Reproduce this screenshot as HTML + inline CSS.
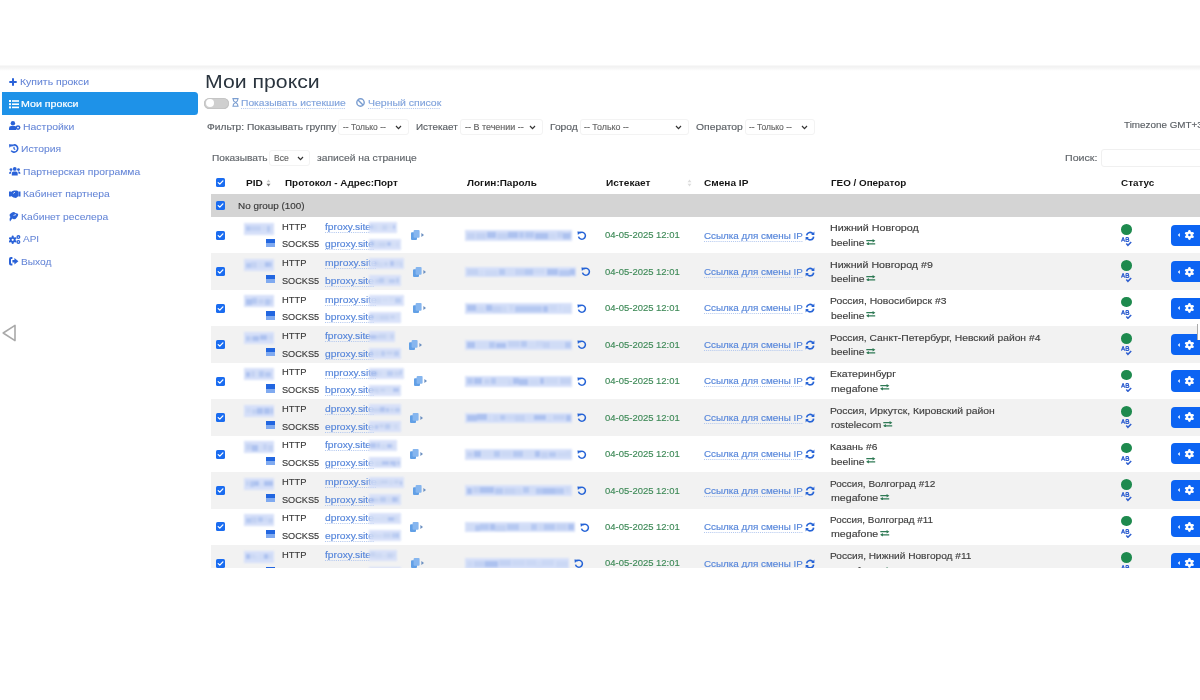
<!DOCTYPE html>
<html><head><meta charset="utf-8"><style>
html,body{margin:0;padding:0;background:#fff;width:1200px;height:700px;overflow:hidden;position:relative}
.t{position:absolute;font-family:"Liberation Sans",sans-serif;white-space:pre;line-height:1;transform-origin:0 0}
.dot{text-decoration:underline dotted #b3c8ef;text-decoration-thickness:1px;text-underline-offset:2.2px}
.blur{position:absolute;background:#d6e0f9;filter:blur(1px)}
.blur i{position:absolute}
.tb .blur{opacity:0.92}
#clip{position:absolute;left:0;top:0;width:1200px;height:568px;overflow:hidden}
</style></head><body>
<div id="clip">
<div style='position:absolute;left:0.00px;top:64.50px;width:1200.00px;height:6.50px;background:linear-gradient(#fbfbfb,#f2f2f2 25%,#f6f6f6 55%,#ffffff)'></div>
<div style='position:absolute;left:2.00px;top:92.30px;width:196.00px;height:22.70px;background:#1e92e8;border-radius:0 3.5px 3.5px 0'></div>
<div style='position:absolute;left:204.40px;top:97.80px;width:24.20px;height:11.10px;background:#cfcfcf;border-radius:6px;box-shadow:inset 0 0 0 0.8px #c2c2c2'></div>
<div style='position:absolute;left:206.20px;top:99.40px;width:8.20px;height:8.00px;background:#fff;border-radius:50%'></div>
<div style='position:absolute;left:338.00px;top:119.40px;width:71.00px;height:15.60px;border:1px solid #f3f3f3;border-radius:3px;box-sizing:border-box;background:#fff'></div>
<div style='position:absolute;left:460.00px;top:119.40px;width:83.00px;height:15.60px;border:1px solid #f3f3f3;border-radius:3px;box-sizing:border-box;background:#fff'></div>
<div style='position:absolute;left:580.00px;top:119.40px;width:109.00px;height:15.60px;border:1px solid #f3f3f3;border-radius:3px;box-sizing:border-box;background:#fff'></div>
<div style='position:absolute;left:745.00px;top:119.40px;width:70.00px;height:15.60px;border:1px solid #f3f3f3;border-radius:3px;box-sizing:border-box;background:#fff'></div>
<div style='position:absolute;left:269.00px;top:150.00px;width:41.00px;height:16.00px;border:1px solid #f3f3f3;border-radius:3px;box-sizing:border-box;background:#fff'></div>
<div style='position:absolute;left:1101.00px;top:149.00px;width:103.00px;height:17.50px;border:1px solid #f0f0f0;border-radius:3px;box-sizing:border-box'></div>
<div style='position:absolute;left:211.00px;top:194.00px;width:989.00px;height:23.00px;background:#d4d4d4'></div>
<div style='position:absolute;left:211.00px;top:253.45px;width:989.00px;height:36.45px;background:#f2f2f2'></div>
<div style='position:absolute;left:211.00px;top:326.35px;width:989.00px;height:36.45px;background:#f2f2f2'></div>
<div style='position:absolute;left:211.00px;top:399.25px;width:989.00px;height:36.45px;background:#f2f2f2'></div>
<div style='position:absolute;left:211.00px;top:472.15px;width:989.00px;height:36.45px;background:#f2f2f2'></div>
<div style='position:absolute;left:211.00px;top:545.05px;width:989.00px;height:36.45px;background:#f2f2f2'></div>
<svg style='position:absolute;left:9px;top:77.5px' width='8' height='8' viewBox='0 0 8 8'><path d='M4 0.3V7.7M0.3 4H7.7' stroke='#2a62d8' stroke-width='2'/></svg>
<svg style='position:absolute;left:8.7px;top:100px' width='10' height='8.5' viewBox='0 0 10 8.5'><g fill='#fff'><rect x='0' y='0' width='2' height='2'/><rect x='3' y='0.2' width='7' height='1.6'/><rect x='0' y='3.2' width='2' height='2'/><rect x='3' y='3.4' width='7' height='1.6'/><rect x='0' y='6.4' width='2' height='2'/><rect x='3' y='6.6' width='7' height='1.6'/></g></svg>
<svg style='position:absolute;left:9.2px;top:121.4px' width='11.5' height='9' viewBox='0 0 11.5 9'><g fill='#2a62d8'><circle cx='3.9' cy='2.2' r='2.2'/><path d='M0 9 V7.2 Q0 5 2.2 5 H5.6 Q7 5 7.2 6 V9Z'/><circle cx='9' cy='6.6' r='2.4'/></g><circle cx='9' cy='6.6' r='0.9' fill='#fff'/></svg>
<svg style='position:absolute;left:9.2px;top:144.2px' width='9.5' height='9' viewBox='0 0 9.5 9'><path d='M2.3 2.3 A3.6 3.6 0 1 1 2.2 6.6' stroke='#2a62d8' stroke-width='1.6' fill='none'/><path d='M0 0.2 L3.8 0.6 L0.4 3.8Z' fill='#2a62d8'/><path d='M5 2.8 V4.6 L6.2 5.6' stroke='#2a62d8' stroke-width='1.2' fill='none'/></svg>
<svg style='position:absolute;left:9px;top:167px' width='11.5' height='8.5' viewBox='0 0 11.5 8.5'><g fill='#2a62d8'><circle cx='5.75' cy='1.9' r='1.9'/><circle cx='2' cy='2.6' r='1.4'/><circle cx='9.5' cy='2.6' r='1.4'/><path d='M2.8 8.5 V6.6 Q2.8 4.6 4.6 4.6 H6.9 Q8.7 4.6 8.7 6.6 V8.5Z'/><path d='M0 6.8 Q0 4.6 1.8 4.6 H2.8 Q1.8 5.5 1.9 6.8Z'/><path d='M11.5 6.8 Q11.5 4.6 9.7 4.6 H8.7 Q9.7 5.5 9.6 6.8Z'/></g></svg>
<svg style='position:absolute;left:9px;top:189.5px' width='11.5' height='8' viewBox='0 0 11.5 8'><g fill='#2a62d8'><path d='M0 1.5 H2 V6.5 H0Z'/><path d='M9.5 1.5 H11.5 V6.5 H9.5Z'/><path d='M2 2 Q4 0 6 0.6 L8 0.4 Q9.5 1.2 9.5 2 V6 L7 8 Q4.5 8 2 6Z'/></g><path d='M4.2 3.4 L6 2.2' stroke='#fff' stroke-width='0.8'/></svg>
<svg style='position:absolute;left:9.2px;top:212px' width='9.5' height='9.5' viewBox='0 0 9.5 9.5'><g fill='#2a62d8'><path d='M3 0.5 Q5 -0.5 6.5 1 L9 1.8 Q9.6 3.5 8.2 5 L6.5 7 Q4 7.5 3.3 6.5 L1 9.5 Q0 6.5 1.5 5 Q0 3.5 1 2Z'/></g><path d='M4.5 3.4 L7 2.6' stroke='#fff' stroke-width='0.8'/></svg>
<svg style='position:absolute;left:9px;top:234.5px' width='11.5' height='9' viewBox='0 0 11.5 9'><g transform='translate(3.7 4.8)' fill='#2a62d8'><circle r='2.9'/><circle cx='0' cy='-3.1' r='1.1'/><circle cx='0' cy='3.1' r='1.1'/><circle cx='2.7' cy='-1.55' r='1.1'/><circle cx='2.7' cy='1.55' r='1.1'/><circle cx='-2.7' cy='-1.55' r='1.1'/><circle cx='-2.7' cy='1.55' r='1.1'/><circle r='1.1' fill='#fff'/></g><g fill='#2a62d8'><circle cx='9.4' cy='2.1' r='2'/><circle cx='9.4' cy='6.9' r='2'/></g><circle cx='9.4' cy='2.1' r='0.7' fill='#fff'/><circle cx='9.4' cy='6.9' r='0.7' fill='#fff'/></svg>
<svg style='position:absolute;left:9px;top:257px' width='9.5' height='8.5' viewBox='0 0 9.5 8.5'><path d='M3.4 1 H2 Q1 1 1 2 V6.5 Q1 7.5 2 7.5 H3.4' stroke='#2a62d8' stroke-width='2' fill='none'/><path d='M3.4 3.1 H5.4 V0.9 L9.4 4.25 L5.4 7.6 V5.4 H3.4Z' fill='#2a62d8'/></svg>
<svg style='position:absolute;left:231.6px;top:98px' width='7' height='8.8' viewBox='0 0 7 8.8'><path d='M0.4 0.6 H6.6 M0.4 8.2 H6.6 M1.3 0.6 V2 Q1.3 3.2 3.5 4.4 Q5.7 5.6 5.7 6.8 V8.2 M5.7 0.6 V2 Q5.7 3.2 3.5 4.4 Q1.3 5.6 1.3 6.8 V8.2' stroke='#7a9dd0' stroke-width='1.1' fill='none'/></svg>
<svg style='position:absolute;left:356px;top:98px' width='9' height='9' viewBox='0 0 9 9'><circle cx='4.5' cy='4.5' r='3.7' stroke='#7a9dd0' stroke-width='1.4' fill='none'/><path d='M2 2 L7 7' stroke='#7a9dd0' stroke-width='1.4'/></svg>
<svg style='position:absolute;left:1px;top:323px' width='16' height='20' viewBox='0 0 16 20'><path d='M2.2 10 L14 2.4 V17.6Z' stroke='#a9a9a9' stroke-width='1.6' fill='none' stroke-linejoin='round'/></svg>
<svg style='position:absolute;left:216px;top:178px' width='9' height='9' viewBox='0 0 9 9'><rect x='0' y='0' width='9' height='9' rx='1.6' fill='#1a6cf0'/><path d='M2.2 4.6 L3.8 6.1 L6.9 2.9' stroke='#fff' stroke-width='1.3' fill='none' stroke-linecap='round' stroke-linejoin='round'/></svg>
<svg style='position:absolute;left:216px;top:201.3px' width='9' height='9' viewBox='0 0 9 9'><rect x='0' y='0' width='9' height='9' rx='1.6' fill='#1a6cf0'/><path d='M2.2 4.6 L3.8 6.1 L6.9 2.9' stroke='#fff' stroke-width='1.3' fill='none' stroke-linecap='round' stroke-linejoin='round'/></svg>
<svg style='position:absolute;left:394.5px;top:124.8px' width='7' height='5' viewBox='0 0 7 5'><path d='M1 1 L3.5 3.6 L6 1' stroke='#333' stroke-width='1.2' fill='none'/></svg>
<svg style='position:absolute;left:529px;top:124.8px' width='7' height='5' viewBox='0 0 7 5'><path d='M1 1 L3.5 3.6 L6 1' stroke='#333' stroke-width='1.2' fill='none'/></svg>
<svg style='position:absolute;left:675px;top:124.8px' width='7' height='5' viewBox='0 0 7 5'><path d='M1 1 L3.5 3.6 L6 1' stroke='#333' stroke-width='1.2' fill='none'/></svg>
<svg style='position:absolute;left:801px;top:124.8px' width='7' height='5' viewBox='0 0 7 5'><path d='M1 1 L3.5 3.6 L6 1' stroke='#333' stroke-width='1.2' fill='none'/></svg>
<svg style='position:absolute;left:296.5px;top:155.8px' width='7' height='5' viewBox='0 0 7 5'><path d='M1 1 L3.5 3.6 L6 1' stroke='#333' stroke-width='1.2' fill='none'/></svg>
<svg style='position:absolute;left:266px;top:179px' width='5' height='8' viewBox='0 0 5 8'><path d='M2.5 0.5 L4.5 3.3 H0.5Z' fill='#ccc'/><path d='M2.5 7.5 L4.5 4.7 H0.5Z' fill='#777'/></svg>
<svg style='position:absolute;left:687px;top:179px' width='5' height='8' viewBox='0 0 5 8'><path d='M2.5 0.5 L4.5 3.3 H0.5Z' fill='#ddd'/><path d='M2.5 7.5 L4.5 4.7 H0.5Z' fill='#ddd'/></svg>
<svg style='position:absolute;left:216px;top:230.8px' width='9' height='9' viewBox='0 0 9 9'><rect x='0' y='0' width='9' height='9' rx='1.6' fill='#1a6cf0'/><path d='M2.2 4.6 L3.8 6.1 L6.9 2.9' stroke='#fff' stroke-width='1.3' fill='none' stroke-linecap='round' stroke-linejoin='round'/></svg>
<div class='blur' style='left:244.0px;top:222.50px;width:30.0px;height:12.0px'><i style='left:1.5px;top:3.5px;width:4.3px;height:5.4px;background:#b6c9f1'></i><i style='left:5.9px;top:3.4px;width:6.3px;height:5.4px;background:#c3d2f3'></i><i style='left:12.2px;top:3.1px;width:5.0px;height:5.4px;background:#c3d2f3'></i><i style='left:17.7px;top:3.5px;width:4.0px;height:5.4px;background:#d0dcf6'></i><i style='left:22.7px;top:3.8px;width:3.5px;height:5.4px;background:#b6c9f1'></i><i style='left:26.9px;top:3.5px;width:2.1px;height:5.4px;background:#d0dcf6'></i></div>
<div style='position:absolute;left:266px;top:238.50px;width:9px;height:8.3px;background:linear-gradient(#2266e0 0,#2266e0 55%,#80aaf0 55%)'></div>
<svg style='position:absolute;left:411px;top:230.30px' width='14' height='10' viewBox='0 0 14 10'><rect x='0' y='2.2' width='6' height='7.8' rx='1' fill='#62a0e6'/><rect x='2.6' y='0' width='6' height='7.8' rx='1' fill='#86b6ef'/><path d='M10.4 2.9 L13 5 L10.4 7.1Z' fill='#6a8fc0'/></svg>
<div class='blur' style='left:465.0px;top:230.30px;width:107.0px;height:10.5px'><i style='left:1.5px;top:2.8px;width:8.6px;height:5.9px;background:#c3d2f3'></i><i style='left:10.6px;top:2.6px;width:10.6px;height:5.9px;background:#c3d2f3'></i><i style='left:21.6px;top:2.1px;width:9.8px;height:5.9px;background:#adc2ef'></i><i style='left:31.9px;top:2.8px;width:10.7px;height:5.9px;background:#c3d2f3'></i><i style='left:43.0px;top:1.8px;width:10.1px;height:5.9px;background:#adc2ef'></i><i style='left:54.0px;top:2.2px;width:5.3px;height:5.9px;background:#b6c9f1'></i><i style='left:60.4px;top:2.2px;width:9.0px;height:5.9px;background:#b6c9f1'></i><i style='left:70.0px;top:2.7px;width:12.8px;height:5.9px;background:#adc2ef'></i><i style='left:83.2px;top:2.5px;width:8.2px;height:5.9px;background:#cbd8f5'></i><i style='left:91.8px;top:1.9px;width:6.3px;height:5.9px;background:#c3d2f3'></i><i style='left:98.4px;top:2.7px;width:6.3px;height:5.9px;background:#adc2ef'></i><i style='left:105.0px;top:2.2px;width:1.0px;height:5.9px;background:#b6c9f1'></i></div>
<svg style='position:absolute;left:576.7px;top:231.00px' width='10' height='9' viewBox='0 0 10 9'><path d='M2.3 2.3 A3.5 3.5 0 1 1 1.5 5.6' stroke='#2563d6' stroke-width='1.5' fill='none'/><path d='M0.4 0.4 L3.9 0.8 L0.9 3.9Z' fill='#2563d6'/></svg>
<svg style='position:absolute;left:805px;top:230.50px' width='10' height='10' viewBox='0 0 10 10'><path d='M1.6 4.4 A3.5 3.5 0 0 1 8 3' stroke='#2563d6' stroke-width='1.6' fill='none'/><path d='M8.6 5.6 A3.5 3.5 0 0 1 2 7' stroke='#2563d6' stroke-width='1.6' fill='none'/><path d='M9.4 0.6 L9.4 4 L6.2 4Z' fill='#2563d6'/><path d='M0.6 9.4 L0.6 6 L3.8 6Z' fill='#2563d6'/></svg>
<svg style='position:absolute;left:866.3px;top:238.50px' width='9.5' height='6.5' viewBox='0 0 9.5 6.5'><path d='M0.3 1.7 H8 M1.5 4.8 H9.2' stroke='#2f7a55' stroke-width='1.2'/><path d='M6.6 0 L9.4 1.7 L6.6 3.4Z M2.9 3.1 L0.1 4.8 L2.9 6.5Z' fill='#2f7a55'/></svg>
<div style='position:absolute;left:1121px;top:224.00px;width:11px;height:10.5px;border-radius:50%;background:#1e8a4e'></div>
<svg style='position:absolute;left:1121px;top:237.00px' width='11' height='9.5' viewBox='0 0 11 9.5'><path d='M0.5 4.6 L2.1 0.4 L3.7 4.6 M1.2 3.2 H3' stroke='#2f5fd0' stroke-width='1.1' fill='none'/><path d='M5 0.5 V4.5 H6.7 Q7.9 4.5 7.9 3.4 Q7.9 2.4 6.6 2.4 H5 M5 0.5 H6.5 Q7.6 0.5 7.6 1.4 Q7.6 2.4 6.5 2.4' stroke='#2f5fd0' stroke-width='1.05' fill='none'/><path d='M5.3 6.6 L6.9 8.3 L10.2 5' stroke='#2f5fd0' stroke-width='1.5' fill='none'/></svg>
<div style='position:absolute;left:1170.8px;top:224.60px;width:35px;height:21.2px;border-radius:4px;background:#0c64f3'></div>
<svg style='position:absolute;left:1176px;top:229.20px' width='20' height='12' viewBox='0 0 20 12'><path d='M3.8 3.9 L1.8 6 L3.8 8.1Z' fill='#fff'/><g transform='translate(13.4 6)' fill='#fff'><circle r='3.4'/><circle cx='0' cy='-3.6' r='1.3'/><circle cx='0' cy='3.6' r='1.3'/><circle cx='3.12' cy='-1.8' r='1.3'/><circle cx='3.12' cy='1.8' r='1.3'/><circle cx='-3.12' cy='-1.8' r='1.3'/><circle cx='-3.12' cy='1.8' r='1.3'/><circle r='1.2' fill='#0c64f3'/></g></svg>
<svg style='position:absolute;left:216px;top:267.25px' width='9' height='9' viewBox='0 0 9 9'><rect x='0' y='0' width='9' height='9' rx='1.6' fill='#1a6cf0'/><path d='M2.2 4.6 L3.8 6.1 L6.9 2.9' stroke='#fff' stroke-width='1.3' fill='none' stroke-linecap='round' stroke-linejoin='round'/></svg>
<div class='blur' style='left:244.0px;top:258.95px;width:30.0px;height:12.0px'><i style='left:1.5px;top:3.8px;width:5.3px;height:5.4px;background:#b6c9f1'></i><i style='left:7.4px;top:3.5px;width:5.5px;height:5.4px;background:#c3d2f3'></i><i style='left:13.9px;top:3.5px;width:6.8px;height:5.4px;background:#d0dcf6'></i><i style='left:21.2px;top:3.1px;width:3.4px;height:5.4px;background:#adc2ef'></i><i style='left:24.7px;top:3.1px;width:3.8px;height:5.4px;background:#b6c9f1'></i></div>
<div style='position:absolute;left:266px;top:274.95px;width:9px;height:8.3px;background:linear-gradient(#2266e0 0,#2266e0 55%,#80aaf0 55%)'></div>
<svg style='position:absolute;left:413px;top:266.75px' width='14' height='10' viewBox='0 0 14 10'><rect x='0' y='2.2' width='6' height='7.8' rx='1' fill='#62a0e6'/><rect x='2.6' y='0' width='6' height='7.8' rx='1' fill='#86b6ef'/><path d='M10.4 2.9 L13 5 L10.4 7.1Z' fill='#6a8fc0'/></svg>
<div class='blur' style='left:465.0px;top:266.75px;width:111.0px;height:10.5px'><i style='left:1.5px;top:2.7px;width:11.3px;height:5.9px;background:#c3d2f3'></i><i style='left:13.4px;top:2.9px;width:5.9px;height:5.9px;background:#d0dcf6'></i><i style='left:19.8px;top:2.9px;width:13.4px;height:5.9px;background:#cbd8f5'></i><i style='left:33.7px;top:2.3px;width:6.2px;height:5.9px;background:#b6c9f1'></i><i style='left:40.3px;top:2.7px;width:8.8px;height:5.9px;background:#d0dcf6'></i><i style='left:49.7px;top:2.7px;width:10.5px;height:5.9px;background:#c3d2f3'></i><i style='left:60.3px;top:2.3px;width:7.9px;height:5.9px;background:#b6c9f1'></i><i style='left:68.4px;top:1.8px;width:11.9px;height:5.9px;background:#cbd8f5'></i><i style='left:81.5px;top:2.2px;width:11.2px;height:5.9px;background:#adc2ef'></i><i style='left:93.8px;top:2.9px;width:11.2px;height:5.9px;background:#b6c9f1'></i><i style='left:105.1px;top:2.7px;width:4.9px;height:5.9px;background:#adc2ef'></i></div>
<svg style='position:absolute;left:580.7px;top:267.45px' width='10' height='9' viewBox='0 0 10 9'><path d='M2.3 2.3 A3.5 3.5 0 1 1 1.5 5.6' stroke='#2563d6' stroke-width='1.5' fill='none'/><path d='M0.4 0.4 L3.9 0.8 L0.9 3.9Z' fill='#2563d6'/></svg>
<svg style='position:absolute;left:805px;top:266.95px' width='10' height='10' viewBox='0 0 10 10'><path d='M1.6 4.4 A3.5 3.5 0 0 1 8 3' stroke='#2563d6' stroke-width='1.6' fill='none'/><path d='M8.6 5.6 A3.5 3.5 0 0 1 2 7' stroke='#2563d6' stroke-width='1.6' fill='none'/><path d='M9.4 0.6 L9.4 4 L6.2 4Z' fill='#2563d6'/><path d='M0.6 9.4 L0.6 6 L3.8 6Z' fill='#2563d6'/></svg>
<svg style='position:absolute;left:866.3px;top:274.95px' width='9.5' height='6.5' viewBox='0 0 9.5 6.5'><path d='M0.3 1.7 H8 M1.5 4.8 H9.2' stroke='#2f7a55' stroke-width='1.2'/><path d='M6.6 0 L9.4 1.7 L6.6 3.4Z M2.9 3.1 L0.1 4.8 L2.9 6.5Z' fill='#2f7a55'/></svg>
<div style='position:absolute;left:1121px;top:260.45px;width:11px;height:10.5px;border-radius:50%;background:#1e8a4e'></div>
<svg style='position:absolute;left:1121px;top:273.45px' width='11' height='9.5' viewBox='0 0 11 9.5'><path d='M0.5 4.6 L2.1 0.4 L3.7 4.6 M1.2 3.2 H3' stroke='#2f5fd0' stroke-width='1.1' fill='none'/><path d='M5 0.5 V4.5 H6.7 Q7.9 4.5 7.9 3.4 Q7.9 2.4 6.6 2.4 H5 M5 0.5 H6.5 Q7.6 0.5 7.6 1.4 Q7.6 2.4 6.5 2.4' stroke='#2f5fd0' stroke-width='1.05' fill='none'/><path d='M5.3 6.6 L6.9 8.3 L10.2 5' stroke='#2f5fd0' stroke-width='1.5' fill='none'/></svg>
<div style='position:absolute;left:1170.8px;top:261.05px;width:35px;height:21.2px;border-radius:4px;background:#0c64f3'></div>
<svg style='position:absolute;left:1176px;top:265.65px' width='20' height='12' viewBox='0 0 20 12'><path d='M3.8 3.9 L1.8 6 L3.8 8.1Z' fill='#fff'/><g transform='translate(13.4 6)' fill='#fff'><circle r='3.4'/><circle cx='0' cy='-3.6' r='1.3'/><circle cx='0' cy='3.6' r='1.3'/><circle cx='3.12' cy='-1.8' r='1.3'/><circle cx='3.12' cy='1.8' r='1.3'/><circle cx='-3.12' cy='-1.8' r='1.3'/><circle cx='-3.12' cy='1.8' r='1.3'/><circle r='1.2' fill='#0c64f3'/></g></svg>
<svg style='position:absolute;left:216px;top:303.7px' width='9' height='9' viewBox='0 0 9 9'><rect x='0' y='0' width='9' height='9' rx='1.6' fill='#1a6cf0'/><path d='M2.2 4.6 L3.8 6.1 L6.9 2.9' stroke='#fff' stroke-width='1.3' fill='none' stroke-linecap='round' stroke-linejoin='round'/></svg>
<div class='blur' style='left:244.0px;top:295.40px;width:30.0px;height:12.0px'><i style='left:1.5px;top:3.8px;width:6.3px;height:5.4px;background:#adc2ef'></i><i style='left:8.2px;top:3.0px;width:5.2px;height:5.4px;background:#b6c9f1'></i><i style='left:14.4px;top:3.6px;width:5.9px;height:5.4px;background:#c3d2f3'></i><i style='left:21.4px;top:4.0px;width:4.7px;height:5.4px;background:#b6c9f1'></i><i style='left:26.4px;top:3.6px;width:2.6px;height:5.4px;background:#cbd8f5'></i></div>
<div style='position:absolute;left:266px;top:311.40px;width:9px;height:8.3px;background:linear-gradient(#2266e0 0,#2266e0 55%,#80aaf0 55%)'></div>
<svg style='position:absolute;left:413px;top:303.20px' width='14' height='10' viewBox='0 0 14 10'><rect x='0' y='2.2' width='6' height='7.8' rx='1' fill='#62a0e6'/><rect x='2.6' y='0' width='6' height='7.8' rx='1' fill='#86b6ef'/><path d='M10.4 2.9 L13 5 L10.4 7.1Z' fill='#6a8fc0'/></svg>
<div class='blur' style='left:465.0px;top:303.20px;width:107.0px;height:10.5px'><i style='left:1.5px;top:2.3px;width:9.1px;height:5.9px;background:#adc2ef'></i><i style='left:10.9px;top:2.8px;width:9.2px;height:5.9px;background:#cbd8f5'></i><i style='left:21.2px;top:1.9px;width:6.0px;height:5.9px;background:#adc2ef'></i><i style='left:27.4px;top:2.5px;width:8.4px;height:5.9px;background:#c3d2f3'></i><i style='left:36.3px;top:2.7px;width:6.1px;height:5.9px;background:#cbd8f5'></i><i style='left:43.5px;top:1.9px;width:5.5px;height:5.9px;background:#cbd8f5'></i><i style='left:50.1px;top:2.6px;width:13.7px;height:5.9px;background:#b6c9f1'></i><i style='left:63.9px;top:2.9px;width:12.8px;height:5.9px;background:#b6c9f1'></i><i style='left:77.7px;top:2.9px;width:5.6px;height:5.9px;background:#adc2ef'></i><i style='left:83.8px;top:2.1px;width:8.2px;height:5.9px;background:#cbd8f5'></i><i style='left:92.9px;top:2.3px;width:4.2px;height:5.9px;background:#d0dcf6'></i><i style='left:98.0px;top:2.5px;width:7.8px;height:5.9px;background:#d0dcf6'></i></div>
<svg style='position:absolute;left:576.7px;top:303.90px' width='10' height='9' viewBox='0 0 10 9'><path d='M2.3 2.3 A3.5 3.5 0 1 1 1.5 5.6' stroke='#2563d6' stroke-width='1.5' fill='none'/><path d='M0.4 0.4 L3.9 0.8 L0.9 3.9Z' fill='#2563d6'/></svg>
<svg style='position:absolute;left:805px;top:303.40px' width='10' height='10' viewBox='0 0 10 10'><path d='M1.6 4.4 A3.5 3.5 0 0 1 8 3' stroke='#2563d6' stroke-width='1.6' fill='none'/><path d='M8.6 5.6 A3.5 3.5 0 0 1 2 7' stroke='#2563d6' stroke-width='1.6' fill='none'/><path d='M9.4 0.6 L9.4 4 L6.2 4Z' fill='#2563d6'/><path d='M0.6 9.4 L0.6 6 L3.8 6Z' fill='#2563d6'/></svg>
<svg style='position:absolute;left:866.3px;top:311.40px' width='9.5' height='6.5' viewBox='0 0 9.5 6.5'><path d='M0.3 1.7 H8 M1.5 4.8 H9.2' stroke='#2f7a55' stroke-width='1.2'/><path d='M6.6 0 L9.4 1.7 L6.6 3.4Z M2.9 3.1 L0.1 4.8 L2.9 6.5Z' fill='#2f7a55'/></svg>
<div style='position:absolute;left:1121px;top:296.90px;width:11px;height:10.5px;border-radius:50%;background:#1e8a4e'></div>
<svg style='position:absolute;left:1121px;top:309.90px' width='11' height='9.5' viewBox='0 0 11 9.5'><path d='M0.5 4.6 L2.1 0.4 L3.7 4.6 M1.2 3.2 H3' stroke='#2f5fd0' stroke-width='1.1' fill='none'/><path d='M5 0.5 V4.5 H6.7 Q7.9 4.5 7.9 3.4 Q7.9 2.4 6.6 2.4 H5 M5 0.5 H6.5 Q7.6 0.5 7.6 1.4 Q7.6 2.4 6.5 2.4' stroke='#2f5fd0' stroke-width='1.05' fill='none'/><path d='M5.3 6.6 L6.9 8.3 L10.2 5' stroke='#2f5fd0' stroke-width='1.5' fill='none'/></svg>
<div style='position:absolute;left:1170.8px;top:297.50px;width:35px;height:21.2px;border-radius:4px;background:#0c64f3'></div>
<svg style='position:absolute;left:1176px;top:302.10px' width='20' height='12' viewBox='0 0 20 12'><path d='M3.8 3.9 L1.8 6 L3.8 8.1Z' fill='#fff'/><g transform='translate(13.4 6)' fill='#fff'><circle r='3.4'/><circle cx='0' cy='-3.6' r='1.3'/><circle cx='0' cy='3.6' r='1.3'/><circle cx='3.12' cy='-1.8' r='1.3'/><circle cx='3.12' cy='1.8' r='1.3'/><circle cx='-3.12' cy='-1.8' r='1.3'/><circle cx='-3.12' cy='1.8' r='1.3'/><circle r='1.2' fill='#0c64f3'/></g></svg>
<svg style='position:absolute;left:216px;top:340.15000000000003px' width='9' height='9' viewBox='0 0 9 9'><rect x='0' y='0' width='9' height='9' rx='1.6' fill='#1a6cf0'/><path d='M2.2 4.6 L3.8 6.1 L6.9 2.9' stroke='#fff' stroke-width='1.3' fill='none' stroke-linecap='round' stroke-linejoin='round'/></svg>
<div class='blur' style='left:244.0px;top:331.85px;width:30.0px;height:12.0px'><i style='left:1.5px;top:4.2px;width:3.3px;height:5.4px;background:#b6c9f1'></i><i style='left:4.9px;top:4.1px;width:4.1px;height:5.4px;background:#c3d2f3'></i><i style='left:9.2px;top:4.0px;width:6.0px;height:5.4px;background:#adc2ef'></i><i style='left:16.0px;top:3.2px;width:6.8px;height:5.4px;background:#adc2ef'></i><i style='left:23.9px;top:3.1px;width:5.1px;height:5.4px;background:#cbd8f5'></i></div>
<div style='position:absolute;left:266px;top:347.85px;width:9px;height:8.3px;background:linear-gradient(#2266e0 0,#2266e0 55%,#80aaf0 55%)'></div>
<svg style='position:absolute;left:409px;top:339.65px' width='14' height='10' viewBox='0 0 14 10'><rect x='0' y='2.2' width='6' height='7.8' rx='1' fill='#62a0e6'/><rect x='2.6' y='0' width='6' height='7.8' rx='1' fill='#86b6ef'/><path d='M10.4 2.9 L13 5 L10.4 7.1Z' fill='#6a8fc0'/></svg>
<div class='blur' style='left:465.0px;top:339.65px;width:107.0px;height:10.5px'><i style='left:1.5px;top:2.5px;width:8.5px;height:5.9px;background:#adc2ef'></i><i style='left:10.6px;top:2.1px;width:12.9px;height:5.9px;background:#d0dcf6'></i><i style='left:23.8px;top:2.7px;width:6.3px;height:5.9px;background:#b6c9f1'></i><i style='left:30.9px;top:2.9px;width:10.4px;height:5.9px;background:#adc2ef'></i><i style='left:42.5px;top:1.8px;width:12.4px;height:5.9px;background:#c3d2f3'></i><i style='left:55.7px;top:1.8px;width:6.6px;height:5.9px;background:#b6c9f1'></i><i style='left:63.1px;top:2.5px;width:7.8px;height:5.9px;background:#d0dcf6'></i><i style='left:71.2px;top:1.8px;width:6.4px;height:5.9px;background:#cbd8f5'></i><i style='left:77.9px;top:2.0px;width:6.7px;height:5.9px;background:#c3d2f3'></i><i style='left:85.7px;top:2.1px;width:13.7px;height:5.9px;background:#d0dcf6'></i><i style='left:99.5px;top:2.1px;width:6.5px;height:5.9px;background:#b6c9f1'></i></div>
<svg style='position:absolute;left:576.7px;top:340.35px' width='10' height='9' viewBox='0 0 10 9'><path d='M2.3 2.3 A3.5 3.5 0 1 1 1.5 5.6' stroke='#2563d6' stroke-width='1.5' fill='none'/><path d='M0.4 0.4 L3.9 0.8 L0.9 3.9Z' fill='#2563d6'/></svg>
<svg style='position:absolute;left:805px;top:339.85px' width='10' height='10' viewBox='0 0 10 10'><path d='M1.6 4.4 A3.5 3.5 0 0 1 8 3' stroke='#2563d6' stroke-width='1.6' fill='none'/><path d='M8.6 5.6 A3.5 3.5 0 0 1 2 7' stroke='#2563d6' stroke-width='1.6' fill='none'/><path d='M9.4 0.6 L9.4 4 L6.2 4Z' fill='#2563d6'/><path d='M0.6 9.4 L0.6 6 L3.8 6Z' fill='#2563d6'/></svg>
<svg style='position:absolute;left:866.3px;top:347.85px' width='9.5' height='6.5' viewBox='0 0 9.5 6.5'><path d='M0.3 1.7 H8 M1.5 4.8 H9.2' stroke='#2f7a55' stroke-width='1.2'/><path d='M6.6 0 L9.4 1.7 L6.6 3.4Z M2.9 3.1 L0.1 4.8 L2.9 6.5Z' fill='#2f7a55'/></svg>
<div style='position:absolute;left:1121px;top:333.35px;width:11px;height:10.5px;border-radius:50%;background:#1e8a4e'></div>
<svg style='position:absolute;left:1121px;top:346.35px' width='11' height='9.5' viewBox='0 0 11 9.5'><path d='M0.5 4.6 L2.1 0.4 L3.7 4.6 M1.2 3.2 H3' stroke='#2f5fd0' stroke-width='1.1' fill='none'/><path d='M5 0.5 V4.5 H6.7 Q7.9 4.5 7.9 3.4 Q7.9 2.4 6.6 2.4 H5 M5 0.5 H6.5 Q7.6 0.5 7.6 1.4 Q7.6 2.4 6.5 2.4' stroke='#2f5fd0' stroke-width='1.05' fill='none'/><path d='M5.3 6.6 L6.9 8.3 L10.2 5' stroke='#2f5fd0' stroke-width='1.5' fill='none'/></svg>
<div style='position:absolute;left:1170.8px;top:333.95px;width:35px;height:21.2px;border-radius:4px;background:#0c64f3'></div>
<svg style='position:absolute;left:1176px;top:338.55px' width='20' height='12' viewBox='0 0 20 12'><path d='M3.8 3.9 L1.8 6 L3.8 8.1Z' fill='#fff'/><g transform='translate(13.4 6)' fill='#fff'><circle r='3.4'/><circle cx='0' cy='-3.6' r='1.3'/><circle cx='0' cy='3.6' r='1.3'/><circle cx='3.12' cy='-1.8' r='1.3'/><circle cx='3.12' cy='1.8' r='1.3'/><circle cx='-3.12' cy='-1.8' r='1.3'/><circle cx='-3.12' cy='1.8' r='1.3'/><circle r='1.2' fill='#0c64f3'/></g></svg>
<svg style='position:absolute;left:216px;top:376.6px' width='9' height='9' viewBox='0 0 9 9'><rect x='0' y='0' width='9' height='9' rx='1.6' fill='#1a6cf0'/><path d='M2.2 4.6 L3.8 6.1 L6.9 2.9' stroke='#fff' stroke-width='1.3' fill='none' stroke-linecap='round' stroke-linejoin='round'/></svg>
<div class='blur' style='left:244.0px;top:368.30px;width:30.0px;height:12.0px'><i style='left:1.5px;top:3.3px;width:4.5px;height:5.4px;background:#adc2ef'></i><i style='left:6.8px;top:3.1px;width:4.0px;height:5.4px;background:#c3d2f3'></i><i style='left:11.8px;top:3.1px;width:3.6px;height:5.4px;background:#d0dcf6'></i><i style='left:15.4px;top:3.1px;width:4.2px;height:5.4px;background:#b6c9f1'></i><i style='left:20.8px;top:3.8px;width:6.4px;height:5.4px;background:#b6c9f1'></i></div>
<div style='position:absolute;left:266px;top:384.30px;width:9px;height:8.3px;background:linear-gradient(#2266e0 0,#2266e0 55%,#80aaf0 55%)'></div>
<svg style='position:absolute;left:414px;top:376.10px' width='14' height='10' viewBox='0 0 14 10'><rect x='0' y='2.2' width='6' height='7.8' rx='1' fill='#62a0e6'/><rect x='2.6' y='0' width='6' height='7.8' rx='1' fill='#86b6ef'/><path d='M10.4 2.9 L13 5 L10.4 7.1Z' fill='#6a8fc0'/></svg>
<div class='blur' style='left:465.0px;top:376.10px;width:107.0px;height:10.5px'><i style='left:1.5px;top:2.0px;width:6.7px;height:5.9px;background:#b6c9f1'></i><i style='left:8.9px;top:1.8px;width:8.6px;height:5.9px;background:#adc2ef'></i><i style='left:18.6px;top:2.5px;width:6.9px;height:5.9px;background:#c3d2f3'></i><i style='left:26.3px;top:2.1px;width:4.8px;height:5.9px;background:#b6c9f1'></i><i style='left:31.8px;top:2.4px;width:10.9px;height:5.9px;background:#d0dcf6'></i><i style='left:42.8px;top:2.9px;width:4.6px;height:5.9px;background:#cbd8f5'></i><i style='left:47.5px;top:2.1px;width:6.2px;height:5.9px;background:#adc2ef'></i><i style='left:54.3px;top:2.6px;width:8.6px;height:5.9px;background:#adc2ef'></i><i style='left:64.1px;top:2.9px;width:9.5px;height:5.9px;background:#cbd8f5'></i><i style='left:74.8px;top:1.8px;width:4.2px;height:5.9px;background:#adc2ef'></i><i style='left:79.5px;top:2.2px;width:13.9px;height:5.9px;background:#cbd8f5'></i><i style='left:94.6px;top:2.4px;width:11.4px;height:5.9px;background:#c3d2f3'></i></div>
<svg style='position:absolute;left:576.7px;top:376.80px' width='10' height='9' viewBox='0 0 10 9'><path d='M2.3 2.3 A3.5 3.5 0 1 1 1.5 5.6' stroke='#2563d6' stroke-width='1.5' fill='none'/><path d='M0.4 0.4 L3.9 0.8 L0.9 3.9Z' fill='#2563d6'/></svg>
<svg style='position:absolute;left:805px;top:376.30px' width='10' height='10' viewBox='0 0 10 10'><path d='M1.6 4.4 A3.5 3.5 0 0 1 8 3' stroke='#2563d6' stroke-width='1.6' fill='none'/><path d='M8.6 5.6 A3.5 3.5 0 0 1 2 7' stroke='#2563d6' stroke-width='1.6' fill='none'/><path d='M9.4 0.6 L9.4 4 L6.2 4Z' fill='#2563d6'/><path d='M0.6 9.4 L0.6 6 L3.8 6Z' fill='#2563d6'/></svg>
<svg style='position:absolute;left:880px;top:384.30px' width='9.5' height='6.5' viewBox='0 0 9.5 6.5'><path d='M0.3 1.7 H8 M1.5 4.8 H9.2' stroke='#2f7a55' stroke-width='1.2'/><path d='M6.6 0 L9.4 1.7 L6.6 3.4Z M2.9 3.1 L0.1 4.8 L2.9 6.5Z' fill='#2f7a55'/></svg>
<div style='position:absolute;left:1121px;top:369.80px;width:11px;height:10.5px;border-radius:50%;background:#1e8a4e'></div>
<svg style='position:absolute;left:1121px;top:382.80px' width='11' height='9.5' viewBox='0 0 11 9.5'><path d='M0.5 4.6 L2.1 0.4 L3.7 4.6 M1.2 3.2 H3' stroke='#2f5fd0' stroke-width='1.1' fill='none'/><path d='M5 0.5 V4.5 H6.7 Q7.9 4.5 7.9 3.4 Q7.9 2.4 6.6 2.4 H5 M5 0.5 H6.5 Q7.6 0.5 7.6 1.4 Q7.6 2.4 6.5 2.4' stroke='#2f5fd0' stroke-width='1.05' fill='none'/><path d='M5.3 6.6 L6.9 8.3 L10.2 5' stroke='#2f5fd0' stroke-width='1.5' fill='none'/></svg>
<div style='position:absolute;left:1170.8px;top:370.40px;width:35px;height:21.2px;border-radius:4px;background:#0c64f3'></div>
<svg style='position:absolute;left:1176px;top:375.00px' width='20' height='12' viewBox='0 0 20 12'><path d='M3.8 3.9 L1.8 6 L3.8 8.1Z' fill='#fff'/><g transform='translate(13.4 6)' fill='#fff'><circle r='3.4'/><circle cx='0' cy='-3.6' r='1.3'/><circle cx='0' cy='3.6' r='1.3'/><circle cx='3.12' cy='-1.8' r='1.3'/><circle cx='3.12' cy='1.8' r='1.3'/><circle cx='-3.12' cy='-1.8' r='1.3'/><circle cx='-3.12' cy='1.8' r='1.3'/><circle r='1.2' fill='#0c64f3'/></g></svg>
<svg style='position:absolute;left:216px;top:413.05px' width='9' height='9' viewBox='0 0 9 9'><rect x='0' y='0' width='9' height='9' rx='1.6' fill='#1a6cf0'/><path d='M2.2 4.6 L3.8 6.1 L6.9 2.9' stroke='#fff' stroke-width='1.3' fill='none' stroke-linecap='round' stroke-linejoin='round'/></svg>
<div class='blur' style='left:244.0px;top:404.75px;width:30.0px;height:12.0px'><i style='left:1.5px;top:3.2px;width:5.1px;height:5.4px;background:#cbd8f5'></i><i style='left:7.6px;top:3.8px;width:5.0px;height:5.4px;background:#c3d2f3'></i><i style='left:12.9px;top:3.5px;width:6.6px;height:5.4px;background:#adc2ef'></i><i style='left:19.7px;top:3.5px;width:6.8px;height:5.4px;background:#adc2ef'></i><i style='left:27.3px;top:3.4px;width:1.7px;height:5.4px;background:#adc2ef'></i></div>
<div style='position:absolute;left:266px;top:420.75px;width:9px;height:8.3px;background:linear-gradient(#2266e0 0,#2266e0 55%,#80aaf0 55%)'></div>
<svg style='position:absolute;left:410px;top:412.55px' width='14' height='10' viewBox='0 0 14 10'><rect x='0' y='2.2' width='6' height='7.8' rx='1' fill='#62a0e6'/><rect x='2.6' y='0' width='6' height='7.8' rx='1' fill='#86b6ef'/><path d='M10.4 2.9 L13 5 L10.4 7.1Z' fill='#6a8fc0'/></svg>
<div class='blur' style='left:465.0px;top:412.55px;width:107.0px;height:10.5px'><i style='left:1.5px;top:2.5px;width:10.5px;height:5.9px;background:#adc2ef'></i><i style='left:12.4px;top:1.9px;width:9.6px;height:5.9px;background:#adc2ef'></i><i style='left:22.7px;top:2.8px;width:4.8px;height:5.9px;background:#d0dcf6'></i><i style='left:28.1px;top:2.9px;width:6.2px;height:5.9px;background:#cbd8f5'></i><i style='left:34.8px;top:2.0px;width:5.4px;height:5.9px;background:#b6c9f1'></i><i style='left:40.4px;top:2.0px;width:9.6px;height:5.9px;background:#cbd8f5'></i><i style='left:50.3px;top:2.6px;width:9.7px;height:5.9px;background:#c3d2f3'></i><i style='left:60.5px;top:2.0px;width:8.1px;height:5.9px;background:#d0dcf6'></i><i style='left:69.0px;top:2.0px;width:11.5px;height:5.9px;background:#adc2ef'></i><i style='left:81.6px;top:2.3px;width:5.3px;height:5.9px;background:#d0dcf6'></i><i style='left:87.8px;top:2.0px;width:12.5px;height:5.9px;background:#c3d2f3'></i><i style='left:100.6px;top:2.2px;width:5.4px;height:5.9px;background:#adc2ef'></i></div>
<svg style='position:absolute;left:576.7px;top:413.25px' width='10' height='9' viewBox='0 0 10 9'><path d='M2.3 2.3 A3.5 3.5 0 1 1 1.5 5.6' stroke='#2563d6' stroke-width='1.5' fill='none'/><path d='M0.4 0.4 L3.9 0.8 L0.9 3.9Z' fill='#2563d6'/></svg>
<svg style='position:absolute;left:805px;top:412.75px' width='10' height='10' viewBox='0 0 10 10'><path d='M1.6 4.4 A3.5 3.5 0 0 1 8 3' stroke='#2563d6' stroke-width='1.6' fill='none'/><path d='M8.6 5.6 A3.5 3.5 0 0 1 2 7' stroke='#2563d6' stroke-width='1.6' fill='none'/><path d='M9.4 0.6 L9.4 4 L6.2 4Z' fill='#2563d6'/><path d='M0.6 9.4 L0.6 6 L3.8 6Z' fill='#2563d6'/></svg>
<svg style='position:absolute;left:883px;top:420.75px' width='9.5' height='6.5' viewBox='0 0 9.5 6.5'><path d='M0.3 1.7 H8 M1.5 4.8 H9.2' stroke='#2f7a55' stroke-width='1.2'/><path d='M6.6 0 L9.4 1.7 L6.6 3.4Z M2.9 3.1 L0.1 4.8 L2.9 6.5Z' fill='#2f7a55'/></svg>
<div style='position:absolute;left:1121px;top:406.25px;width:11px;height:10.5px;border-radius:50%;background:#1e8a4e'></div>
<svg style='position:absolute;left:1121px;top:419.25px' width='11' height='9.5' viewBox='0 0 11 9.5'><path d='M0.5 4.6 L2.1 0.4 L3.7 4.6 M1.2 3.2 H3' stroke='#2f5fd0' stroke-width='1.1' fill='none'/><path d='M5 0.5 V4.5 H6.7 Q7.9 4.5 7.9 3.4 Q7.9 2.4 6.6 2.4 H5 M5 0.5 H6.5 Q7.6 0.5 7.6 1.4 Q7.6 2.4 6.5 2.4' stroke='#2f5fd0' stroke-width='1.05' fill='none'/><path d='M5.3 6.6 L6.9 8.3 L10.2 5' stroke='#2f5fd0' stroke-width='1.5' fill='none'/></svg>
<div style='position:absolute;left:1170.8px;top:406.85px;width:35px;height:21.2px;border-radius:4px;background:#0c64f3'></div>
<svg style='position:absolute;left:1176px;top:411.45px' width='20' height='12' viewBox='0 0 20 12'><path d='M3.8 3.9 L1.8 6 L3.8 8.1Z' fill='#fff'/><g transform='translate(13.4 6)' fill='#fff'><circle r='3.4'/><circle cx='0' cy='-3.6' r='1.3'/><circle cx='0' cy='3.6' r='1.3'/><circle cx='3.12' cy='-1.8' r='1.3'/><circle cx='3.12' cy='1.8' r='1.3'/><circle cx='-3.12' cy='-1.8' r='1.3'/><circle cx='-3.12' cy='1.8' r='1.3'/><circle r='1.2' fill='#0c64f3'/></g></svg>
<svg style='position:absolute;left:216px;top:449.50000000000006px' width='9' height='9' viewBox='0 0 9 9'><rect x='0' y='0' width='9' height='9' rx='1.6' fill='#1a6cf0'/><path d='M2.2 4.6 L3.8 6.1 L6.9 2.9' stroke='#fff' stroke-width='1.3' fill='none' stroke-linecap='round' stroke-linejoin='round'/></svg>
<div class='blur' style='left:244.0px;top:441.20px;width:30.0px;height:12.0px'><i style='left:1.5px;top:3.2px;width:6.3px;height:5.4px;background:#c3d2f3'></i><i style='left:8.3px;top:4.2px;width:6.1px;height:5.4px;background:#adc2ef'></i><i style='left:14.9px;top:4.0px;width:3.3px;height:5.4px;background:#d0dcf6'></i><i style='left:19.4px;top:3.3px;width:4.0px;height:5.4px;background:#c3d2f3'></i><i style='left:23.5px;top:4.1px;width:5.5px;height:5.4px;background:#c3d2f3'></i></div>
<div style='position:absolute;left:266px;top:457.20px;width:9px;height:8.3px;background:linear-gradient(#2266e0 0,#2266e0 55%,#80aaf0 55%)'></div>
<svg style='position:absolute;left:410px;top:449.00px' width='14' height='10' viewBox='0 0 14 10'><rect x='0' y='2.2' width='6' height='7.8' rx='1' fill='#62a0e6'/><rect x='2.6' y='0' width='6' height='7.8' rx='1' fill='#86b6ef'/><path d='M10.4 2.9 L13 5 L10.4 7.1Z' fill='#6a8fc0'/></svg>
<div class='blur' style='left:465.0px;top:449.00px;width:107.0px;height:10.5px'><i style='left:1.5px;top:2.5px;width:6.3px;height:5.9px;background:#c3d2f3'></i><i style='left:8.6px;top:1.9px;width:7.6px;height:5.9px;background:#adc2ef'></i><i style='left:17.2px;top:1.8px;width:11.4px;height:5.9px;background:#d0dcf6'></i><i style='left:29.2px;top:2.0px;width:6.0px;height:5.9px;background:#b6c9f1'></i><i style='left:35.5px;top:1.8px;width:11.6px;height:5.9px;background:#cbd8f5'></i><i style='left:47.8px;top:2.3px;width:10.1px;height:5.9px;background:#b6c9f1'></i><i style='left:59.0px;top:1.9px;width:4.6px;height:5.9px;background:#d0dcf6'></i><i style='left:64.0px;top:1.9px;width:6.1px;height:5.9px;background:#d0dcf6'></i><i style='left:70.2px;top:2.2px;width:4.6px;height:5.9px;background:#adc2ef'></i><i style='left:75.7px;top:2.9px;width:7.1px;height:5.9px;background:#c3d2f3'></i><i style='left:84.0px;top:2.5px;width:7.3px;height:5.9px;background:#b6c9f1'></i><i style='left:91.9px;top:2.5px;width:8.7px;height:5.9px;background:#cbd8f5'></i><i style='left:101.0px;top:2.2px;width:5.0px;height:5.9px;background:#cbd8f5'></i></div>
<svg style='position:absolute;left:576.7px;top:449.70px' width='10' height='9' viewBox='0 0 10 9'><path d='M2.3 2.3 A3.5 3.5 0 1 1 1.5 5.6' stroke='#2563d6' stroke-width='1.5' fill='none'/><path d='M0.4 0.4 L3.9 0.8 L0.9 3.9Z' fill='#2563d6'/></svg>
<svg style='position:absolute;left:805px;top:449.20px' width='10' height='10' viewBox='0 0 10 10'><path d='M1.6 4.4 A3.5 3.5 0 0 1 8 3' stroke='#2563d6' stroke-width='1.6' fill='none'/><path d='M8.6 5.6 A3.5 3.5 0 0 1 2 7' stroke='#2563d6' stroke-width='1.6' fill='none'/><path d='M9.4 0.6 L9.4 4 L6.2 4Z' fill='#2563d6'/><path d='M0.6 9.4 L0.6 6 L3.8 6Z' fill='#2563d6'/></svg>
<svg style='position:absolute;left:866.3px;top:457.20px' width='9.5' height='6.5' viewBox='0 0 9.5 6.5'><path d='M0.3 1.7 H8 M1.5 4.8 H9.2' stroke='#2f7a55' stroke-width='1.2'/><path d='M6.6 0 L9.4 1.7 L6.6 3.4Z M2.9 3.1 L0.1 4.8 L2.9 6.5Z' fill='#2f7a55'/></svg>
<div style='position:absolute;left:1121px;top:442.70px;width:11px;height:10.5px;border-radius:50%;background:#1e8a4e'></div>
<svg style='position:absolute;left:1121px;top:455.70px' width='11' height='9.5' viewBox='0 0 11 9.5'><path d='M0.5 4.6 L2.1 0.4 L3.7 4.6 M1.2 3.2 H3' stroke='#2f5fd0' stroke-width='1.1' fill='none'/><path d='M5 0.5 V4.5 H6.7 Q7.9 4.5 7.9 3.4 Q7.9 2.4 6.6 2.4 H5 M5 0.5 H6.5 Q7.6 0.5 7.6 1.4 Q7.6 2.4 6.5 2.4' stroke='#2f5fd0' stroke-width='1.05' fill='none'/><path d='M5.3 6.6 L6.9 8.3 L10.2 5' stroke='#2f5fd0' stroke-width='1.5' fill='none'/></svg>
<div style='position:absolute;left:1170.8px;top:443.30px;width:35px;height:21.2px;border-radius:4px;background:#0c64f3'></div>
<svg style='position:absolute;left:1176px;top:447.90px' width='20' height='12' viewBox='0 0 20 12'><path d='M3.8 3.9 L1.8 6 L3.8 8.1Z' fill='#fff'/><g transform='translate(13.4 6)' fill='#fff'><circle r='3.4'/><circle cx='0' cy='-3.6' r='1.3'/><circle cx='0' cy='3.6' r='1.3'/><circle cx='3.12' cy='-1.8' r='1.3'/><circle cx='3.12' cy='1.8' r='1.3'/><circle cx='-3.12' cy='-1.8' r='1.3'/><circle cx='-3.12' cy='1.8' r='1.3'/><circle r='1.2' fill='#0c64f3'/></g></svg>
<svg style='position:absolute;left:216px;top:485.95000000000005px' width='9' height='9' viewBox='0 0 9 9'><rect x='0' y='0' width='9' height='9' rx='1.6' fill='#1a6cf0'/><path d='M2.2 4.6 L3.8 6.1 L6.9 2.9' stroke='#fff' stroke-width='1.3' fill='none' stroke-linecap='round' stroke-linejoin='round'/></svg>
<div class='blur' style='left:244.0px;top:477.65px;width:30.0px;height:12.0px'><i style='left:1.5px;top:3.4px;width:3.3px;height:5.4px;background:#c3d2f3'></i><i style='left:6.0px;top:3.5px;width:3.5px;height:5.4px;background:#b6c9f1'></i><i style='left:10.4px;top:3.1px;width:4.2px;height:5.4px;background:#adc2ef'></i><i style='left:15.5px;top:4.1px;width:3.8px;height:5.4px;background:#d0dcf6'></i><i style='left:19.5px;top:3.0px;width:4.5px;height:5.4px;background:#adc2ef'></i><i style='left:24.4px;top:3.0px;width:4.6px;height:5.4px;background:#adc2ef'></i></div>
<div style='position:absolute;left:266px;top:493.65px;width:9px;height:8.3px;background:linear-gradient(#2266e0 0,#2266e0 55%,#80aaf0 55%)'></div>
<svg style='position:absolute;left:413px;top:485.45px' width='14' height='10' viewBox='0 0 14 10'><rect x='0' y='2.2' width='6' height='7.8' rx='1' fill='#62a0e6'/><rect x='2.6' y='0' width='6' height='7.8' rx='1' fill='#86b6ef'/><path d='M10.4 2.9 L13 5 L10.4 7.1Z' fill='#6a8fc0'/></svg>
<div class='blur' style='left:465.0px;top:485.45px;width:107.0px;height:10.5px'><i style='left:1.5px;top:2.8px;width:5.6px;height:5.9px;background:#adc2ef'></i><i style='left:8.3px;top:2.0px;width:6.6px;height:5.9px;background:#c3d2f3'></i><i style='left:15.4px;top:1.9px;width:13.9px;height:5.9px;background:#adc2ef'></i><i style='left:29.5px;top:2.6px;width:8.6px;height:5.9px;background:#b6c9f1'></i><i style='left:39.1px;top:2.6px;width:10.6px;height:5.9px;background:#c3d2f3'></i><i style='left:50.1px;top:2.2px;width:6.8px;height:5.9px;background:#cbd8f5'></i><i style='left:57.8px;top:1.9px;width:6.0px;height:5.9px;background:#b6c9f1'></i><i style='left:64.1px;top:1.9px;width:6.8px;height:5.9px;background:#d0dcf6'></i><i style='left:71.0px;top:2.3px;width:6.5px;height:5.9px;background:#b6c9f1'></i><i style='left:77.8px;top:2.9px;width:12.1px;height:5.9px;background:#adc2ef'></i><i style='left:90.0px;top:2.7px;width:8.7px;height:5.9px;background:#b6c9f1'></i><i style='left:99.8px;top:2.0px;width:4.4px;height:5.9px;background:#cbd8f5'></i><i style='left:104.3px;top:1.9px;width:1.7px;height:5.9px;background:#d0dcf6'></i></div>
<svg style='position:absolute;left:576.7px;top:486.15px' width='10' height='9' viewBox='0 0 10 9'><path d='M2.3 2.3 A3.5 3.5 0 1 1 1.5 5.6' stroke='#2563d6' stroke-width='1.5' fill='none'/><path d='M0.4 0.4 L3.9 0.8 L0.9 3.9Z' fill='#2563d6'/></svg>
<svg style='position:absolute;left:805px;top:485.65px' width='10' height='10' viewBox='0 0 10 10'><path d='M1.6 4.4 A3.5 3.5 0 0 1 8 3' stroke='#2563d6' stroke-width='1.6' fill='none'/><path d='M8.6 5.6 A3.5 3.5 0 0 1 2 7' stroke='#2563d6' stroke-width='1.6' fill='none'/><path d='M9.4 0.6 L9.4 4 L6.2 4Z' fill='#2563d6'/><path d='M0.6 9.4 L0.6 6 L3.8 6Z' fill='#2563d6'/></svg>
<svg style='position:absolute;left:880px;top:493.65px' width='9.5' height='6.5' viewBox='0 0 9.5 6.5'><path d='M0.3 1.7 H8 M1.5 4.8 H9.2' stroke='#2f7a55' stroke-width='1.2'/><path d='M6.6 0 L9.4 1.7 L6.6 3.4Z M2.9 3.1 L0.1 4.8 L2.9 6.5Z' fill='#2f7a55'/></svg>
<div style='position:absolute;left:1121px;top:479.15px;width:11px;height:10.5px;border-radius:50%;background:#1e8a4e'></div>
<svg style='position:absolute;left:1121px;top:492.15px' width='11' height='9.5' viewBox='0 0 11 9.5'><path d='M0.5 4.6 L2.1 0.4 L3.7 4.6 M1.2 3.2 H3' stroke='#2f5fd0' stroke-width='1.1' fill='none'/><path d='M5 0.5 V4.5 H6.7 Q7.9 4.5 7.9 3.4 Q7.9 2.4 6.6 2.4 H5 M5 0.5 H6.5 Q7.6 0.5 7.6 1.4 Q7.6 2.4 6.5 2.4' stroke='#2f5fd0' stroke-width='1.05' fill='none'/><path d='M5.3 6.6 L6.9 8.3 L10.2 5' stroke='#2f5fd0' stroke-width='1.5' fill='none'/></svg>
<div style='position:absolute;left:1170.8px;top:479.75px;width:35px;height:21.2px;border-radius:4px;background:#0c64f3'></div>
<svg style='position:absolute;left:1176px;top:484.35px' width='20' height='12' viewBox='0 0 20 12'><path d='M3.8 3.9 L1.8 6 L3.8 8.1Z' fill='#fff'/><g transform='translate(13.4 6)' fill='#fff'><circle r='3.4'/><circle cx='0' cy='-3.6' r='1.3'/><circle cx='0' cy='3.6' r='1.3'/><circle cx='3.12' cy='-1.8' r='1.3'/><circle cx='3.12' cy='1.8' r='1.3'/><circle cx='-3.12' cy='-1.8' r='1.3'/><circle cx='-3.12' cy='1.8' r='1.3'/><circle r='1.2' fill='#0c64f3'/></g></svg>
<svg style='position:absolute;left:216px;top:522.4px' width='9' height='9' viewBox='0 0 9 9'><rect x='0' y='0' width='9' height='9' rx='1.6' fill='#1a6cf0'/><path d='M2.2 4.6 L3.8 6.1 L6.9 2.9' stroke='#fff' stroke-width='1.3' fill='none' stroke-linecap='round' stroke-linejoin='round'/></svg>
<div class='blur' style='left:244.0px;top:514.10px;width:30.0px;height:12.0px'><i style='left:1.5px;top:3.5px;width:5.1px;height:5.4px;background:#b6c9f1'></i><i style='left:6.9px;top:3.1px;width:6.1px;height:5.4px;background:#c3d2f3'></i><i style='left:13.7px;top:3.0px;width:5.5px;height:5.4px;background:#b6c9f1'></i><i style='left:19.6px;top:3.0px;width:3.2px;height:5.4px;background:#cbd8f5'></i><i style='left:23.6px;top:4.0px;width:5.4px;height:5.4px;background:#c3d2f3'></i></div>
<div style='position:absolute;left:266px;top:530.10px;width:9px;height:8.3px;background:linear-gradient(#2266e0 0,#2266e0 55%,#80aaf0 55%)'></div>
<svg style='position:absolute;left:410px;top:521.90px' width='14' height='10' viewBox='0 0 14 10'><rect x='0' y='2.2' width='6' height='7.8' rx='1' fill='#62a0e6'/><rect x='2.6' y='0' width='6' height='7.8' rx='1' fill='#86b6ef'/><path d='M10.4 2.9 L13 5 L10.4 7.1Z' fill='#6a8fc0'/></svg>
<div class='blur' style='left:465.0px;top:521.90px;width:110.0px;height:10.5px'><i style='left:1.5px;top:1.9px;width:7.7px;height:5.9px;background:#d0dcf6'></i><i style='left:9.6px;top:2.8px;width:5.6px;height:5.9px;background:#b6c9f1'></i><i style='left:15.4px;top:2.1px;width:8.9px;height:5.9px;background:#b6c9f1'></i><i style='left:25.3px;top:2.1px;width:4.4px;height:5.9px;background:#adc2ef'></i><i style='left:30.4px;top:2.8px;width:10.4px;height:5.9px;background:#c3d2f3'></i><i style='left:41.6px;top:2.5px;width:12.2px;height:5.9px;background:#b6c9f1'></i><i style='left:54.8px;top:2.7px;width:10.2px;height:5.9px;background:#d0dcf6'></i><i style='left:66.0px;top:1.8px;width:5.8px;height:5.9px;background:#b6c9f1'></i><i style='left:73.0px;top:1.9px;width:5.6px;height:5.9px;background:#cbd8f5'></i><i style='left:78.9px;top:1.8px;width:11.2px;height:5.9px;background:#b6c9f1'></i><i style='left:90.8px;top:2.5px;width:11.6px;height:5.9px;background:#c3d2f3'></i><i style='left:102.7px;top:2.4px;width:6.3px;height:5.9px;background:#adc2ef'></i></div>
<svg style='position:absolute;left:579.7px;top:522.60px' width='10' height='9' viewBox='0 0 10 9'><path d='M2.3 2.3 A3.5 3.5 0 1 1 1.5 5.6' stroke='#2563d6' stroke-width='1.5' fill='none'/><path d='M0.4 0.4 L3.9 0.8 L0.9 3.9Z' fill='#2563d6'/></svg>
<svg style='position:absolute;left:805px;top:522.10px' width='10' height='10' viewBox='0 0 10 10'><path d='M1.6 4.4 A3.5 3.5 0 0 1 8 3' stroke='#2563d6' stroke-width='1.6' fill='none'/><path d='M8.6 5.6 A3.5 3.5 0 0 1 2 7' stroke='#2563d6' stroke-width='1.6' fill='none'/><path d='M9.4 0.6 L9.4 4 L6.2 4Z' fill='#2563d6'/><path d='M0.6 9.4 L0.6 6 L3.8 6Z' fill='#2563d6'/></svg>
<svg style='position:absolute;left:880px;top:530.10px' width='9.5' height='6.5' viewBox='0 0 9.5 6.5'><path d='M0.3 1.7 H8 M1.5 4.8 H9.2' stroke='#2f7a55' stroke-width='1.2'/><path d='M6.6 0 L9.4 1.7 L6.6 3.4Z M2.9 3.1 L0.1 4.8 L2.9 6.5Z' fill='#2f7a55'/></svg>
<div style='position:absolute;left:1121px;top:515.60px;width:11px;height:10.5px;border-radius:50%;background:#1e8a4e'></div>
<svg style='position:absolute;left:1121px;top:528.60px' width='11' height='9.5' viewBox='0 0 11 9.5'><path d='M0.5 4.6 L2.1 0.4 L3.7 4.6 M1.2 3.2 H3' stroke='#2f5fd0' stroke-width='1.1' fill='none'/><path d='M5 0.5 V4.5 H6.7 Q7.9 4.5 7.9 3.4 Q7.9 2.4 6.6 2.4 H5 M5 0.5 H6.5 Q7.6 0.5 7.6 1.4 Q7.6 2.4 6.5 2.4' stroke='#2f5fd0' stroke-width='1.05' fill='none'/><path d='M5.3 6.6 L6.9 8.3 L10.2 5' stroke='#2f5fd0' stroke-width='1.5' fill='none'/></svg>
<div style='position:absolute;left:1170.8px;top:516.20px;width:35px;height:21.2px;border-radius:4px;background:#0c64f3'></div>
<svg style='position:absolute;left:1176px;top:520.80px' width='20' height='12' viewBox='0 0 20 12'><path d='M3.8 3.9 L1.8 6 L3.8 8.1Z' fill='#fff'/><g transform='translate(13.4 6)' fill='#fff'><circle r='3.4'/><circle cx='0' cy='-3.6' r='1.3'/><circle cx='0' cy='3.6' r='1.3'/><circle cx='3.12' cy='-1.8' r='1.3'/><circle cx='3.12' cy='1.8' r='1.3'/><circle cx='-3.12' cy='-1.8' r='1.3'/><circle cx='-3.12' cy='1.8' r='1.3'/><circle r='1.2' fill='#0c64f3'/></g></svg>
<svg style='position:absolute;left:216px;top:558.8499999999999px' width='9' height='9' viewBox='0 0 9 9'><rect x='0' y='0' width='9' height='9' rx='1.6' fill='#1a6cf0'/><path d='M2.2 4.6 L3.8 6.1 L6.9 2.9' stroke='#fff' stroke-width='1.3' fill='none' stroke-linecap='round' stroke-linejoin='round'/></svg>
<div class='blur' style='left:244.0px;top:550.55px;width:30.0px;height:12.0px'><i style='left:1.5px;top:3.4px;width:4.2px;height:5.4px;background:#adc2ef'></i><i style='left:6.0px;top:3.5px;width:4.6px;height:5.4px;background:#cbd8f5'></i><i style='left:11.1px;top:4.2px;width:3.1px;height:5.4px;background:#d0dcf6'></i><i style='left:14.8px;top:3.9px;width:4.8px;height:5.4px;background:#d0dcf6'></i><i style='left:20.1px;top:3.5px;width:3.7px;height:5.4px;background:#adc2ef'></i><i style='left:23.9px;top:3.1px;width:4.4px;height:5.4px;background:#cbd8f5'></i></div>
<div style='position:absolute;left:266px;top:566.55px;width:9px;height:8.3px;background:linear-gradient(#2266e0 0,#2266e0 55%,#80aaf0 55%)'></div>
<svg style='position:absolute;left:411px;top:558.35px' width='14' height='10' viewBox='0 0 14 10'><rect x='0' y='2.2' width='6' height='7.8' rx='1' fill='#62a0e6'/><rect x='2.6' y='0' width='6' height='7.8' rx='1' fill='#86b6ef'/><path d='M10.4 2.9 L13 5 L10.4 7.1Z' fill='#6a8fc0'/></svg>
<div class='blur' style='left:465.0px;top:558.35px;width:104.0px;height:10.5px'><i style='left:1.5px;top:2.8px;width:6.8px;height:5.9px;background:#cbd8f5'></i><i style='left:8.5px;top:2.6px;width:11.8px;height:5.9px;background:#c3d2f3'></i><i style='left:20.4px;top:2.4px;width:12.6px;height:5.9px;background:#adc2ef'></i><i style='left:33.7px;top:2.0px;width:12.8px;height:5.9px;background:#c3d2f3'></i><i style='left:47.1px;top:2.0px;width:12.6px;height:5.9px;background:#cbd8f5'></i><i style='left:60.9px;top:2.1px;width:9.8px;height:5.9px;background:#cbd8f5'></i><i style='left:70.8px;top:2.6px;width:6.3px;height:5.9px;background:#d0dcf6'></i><i style='left:77.1px;top:2.1px;width:12.2px;height:5.9px;background:#cbd8f5'></i><i style='left:90.5px;top:2.6px;width:12.5px;height:5.9px;background:#cbd8f5'></i></div>
<svg style='position:absolute;left:573.7px;top:559.05px' width='10' height='9' viewBox='0 0 10 9'><path d='M2.3 2.3 A3.5 3.5 0 1 1 1.5 5.6' stroke='#2563d6' stroke-width='1.5' fill='none'/><path d='M0.4 0.4 L3.9 0.8 L0.9 3.9Z' fill='#2563d6'/></svg>
<svg style='position:absolute;left:805px;top:558.55px' width='10' height='10' viewBox='0 0 10 10'><path d='M1.6 4.4 A3.5 3.5 0 0 1 8 3' stroke='#2563d6' stroke-width='1.6' fill='none'/><path d='M8.6 5.6 A3.5 3.5 0 0 1 2 7' stroke='#2563d6' stroke-width='1.6' fill='none'/><path d='M9.4 0.6 L9.4 4 L6.2 4Z' fill='#2563d6'/><path d='M0.6 9.4 L0.6 6 L3.8 6Z' fill='#2563d6'/></svg>
<svg style='position:absolute;left:880px;top:566.55px' width='9.5' height='6.5' viewBox='0 0 9.5 6.5'><path d='M0.3 1.7 H8 M1.5 4.8 H9.2' stroke='#2f7a55' stroke-width='1.2'/><path d='M6.6 0 L9.4 1.7 L6.6 3.4Z M2.9 3.1 L0.1 4.8 L2.9 6.5Z' fill='#2f7a55'/></svg>
<div style='position:absolute;left:1121px;top:552.05px;width:11px;height:10.5px;border-radius:50%;background:#1e8a4e'></div>
<svg style='position:absolute;left:1121px;top:565.05px' width='11' height='9.5' viewBox='0 0 11 9.5'><path d='M0.5 4.6 L2.1 0.4 L3.7 4.6 M1.2 3.2 H3' stroke='#2f5fd0' stroke-width='1.1' fill='none'/><path d='M5 0.5 V4.5 H6.7 Q7.9 4.5 7.9 3.4 Q7.9 2.4 6.6 2.4 H5 M5 0.5 H6.5 Q7.6 0.5 7.6 1.4 Q7.6 2.4 6.5 2.4' stroke='#2f5fd0' stroke-width='1.05' fill='none'/><path d='M5.3 6.6 L6.9 8.3 L10.2 5' stroke='#2f5fd0' stroke-width='1.5' fill='none'/></svg>
<div style='position:absolute;left:1170.8px;top:552.65px;width:35px;height:21.2px;border-radius:4px;background:#0c64f3'></div>
<svg style='position:absolute;left:1176px;top:557.25px' width='20' height='12' viewBox='0 0 20 12'><path d='M3.8 3.9 L1.8 6 L3.8 8.1Z' fill='#fff'/><g transform='translate(13.4 6)' fill='#fff'><circle r='3.4'/><circle cx='0' cy='-3.6' r='1.3'/><circle cx='0' cy='3.6' r='1.3'/><circle cx='3.12' cy='-1.8' r='1.3'/><circle cx='3.12' cy='1.8' r='1.3'/><circle cx='-3.12' cy='-1.8' r='1.3'/><circle cx='-3.12' cy='1.8' r='1.3'/><circle r='1.2' fill='#0c64f3'/></g></svg>
<div style='position:absolute;left:1197px;top:324px;width:3px;height:16px;background:#fff;border-left:1.5px solid #aaa'></div>
<span class='t ' style='left:19.90px;top:76.52px;font-size:9.6px;font-weight:400;color:#6384d6;-webkit-text-stroke:0.05px #6384d6;transform:scaleX(1.091)'>Купить прокси</span>
<span class='t ' style='left:20.70px;top:99.22px;font-size:9.6px;font-weight:400;color:#ffffff;-webkit-text-stroke:0.2px #ffffff;transform:scaleX(1.110)'>Мои прокси</span>
<span class='t ' style='left:23.20px;top:121.92px;font-size:9.6px;font-weight:400;color:#6384d6;-webkit-text-stroke:0.05px #6384d6;transform:scaleX(1.090)'>Настройки</span>
<span class='t ' style='left:20.70px;top:144.42px;font-size:9.6px;font-weight:400;color:#6384d6;-webkit-text-stroke:0.05px #6384d6;transform:scaleX(1.075)'>История</span>
<span class='t ' style='left:23.10px;top:166.62px;font-size:9.6px;font-weight:400;color:#6384d6;-webkit-text-stroke:0.05px #6384d6;transform:scaleX(1.078)'>Партнерская программа</span>
<span class='t ' style='left:23.10px;top:189.22px;font-size:9.6px;font-weight:400;color:#6384d6;-webkit-text-stroke:0.05px #6384d6;transform:scaleX(1.076)'>Кабинет партнера</span>
<span class='t ' style='left:20.70px;top:211.72px;font-size:9.6px;font-weight:400;color:#6384d6;-webkit-text-stroke:0.05px #6384d6;transform:scaleX(1.074)'>Кабинет реселера</span>
<span class='t ' style='left:22.60px;top:234.22px;font-size:9.6px;font-weight:400;color:#6384d6;-webkit-text-stroke:0.05px #6384d6;transform:scaleX(1.041)'>API</span>
<span class='t ' style='left:20.70px;top:256.62px;font-size:9.6px;font-weight:400;color:#6384d6;-webkit-text-stroke:0.05px #6384d6;transform:scaleX(1.062)'>Выход</span>
<span class='t ' style='left:205.40px;top:72.70px;font-size:18px;font-weight:400;color:#2a343e;transform:scaleX(1.180)'>Мои прокси</span>
<span class='t dot' style='left:241.00px;top:97.71px;font-size:9.8px;font-weight:400;color:#80a3dc;-webkit-text-stroke:0.15px #80a3dc;transform:scaleX(1.049)'>Показывать истекшие</span>
<span class='t dot' style='left:367.90px;top:97.71px;font-size:9.8px;font-weight:400;color:#80a3dc;-webkit-text-stroke:0.15px #80a3dc;transform:scaleX(1.070)'>Черный список</span>
<span class='t ' style='left:206.90px;top:122.12px;font-size:9.6px;font-weight:400;color:#5a5f64;-webkit-text-stroke:0.15px #5a5f64;transform:scaleX(1.064)'>Фильтр: Показывать группу</span>
<span class='t ' style='left:415.70px;top:122.12px;font-size:9.6px;font-weight:400;color:#5a5f64;-webkit-text-stroke:0.15px #5a5f64;transform:scaleX(1.030)'>Истекает</span>
<span class='t ' style='left:550.40px;top:122.12px;font-size:9.6px;font-weight:400;color:#5a5f64;-webkit-text-stroke:0.15px #5a5f64;transform:scaleX(1.071)'>Город</span>
<span class='t ' style='left:695.90px;top:122.12px;font-size:9.6px;font-weight:400;color:#5a5f64;-webkit-text-stroke:0.15px #5a5f64;transform:scaleX(1.078)'>Оператор</span>
<span class='t ' style='left:1123.90px;top:120.12px;font-size:9.6px;font-weight:400;color:#5a5f64;-webkit-text-stroke:0.15px #5a5f64;transform:scaleX(1.028)'>Timezone GMT+3</span>
<span class='t ' style='left:342.90px;top:122.53px;font-size:8.5px;font-weight:400;color:#666;-webkit-text-stroke:0.15px #666;transform:scaleX(0.994)'>-- Только --</span>
<span class='t ' style='left:464.90px;top:122.53px;font-size:8.5px;font-weight:400;color:#666;-webkit-text-stroke:0.15px #666;transform:scaleX(1.056)'>-- В течении --</span>
<span class='t ' style='left:583.90px;top:122.53px;font-size:8.5px;font-weight:400;color:#666;-webkit-text-stroke:0.15px #666;transform:scaleX(1.041)'>-- Только --</span>
<span class='t ' style='left:748.90px;top:122.53px;font-size:8.5px;font-weight:400;color:#666;-webkit-text-stroke:0.15px #666;transform:scaleX(0.994)'>-- Только --</span>
<span class='t ' style='left:211.50px;top:153.02px;font-size:9.6px;font-weight:400;color:#60656a;-webkit-text-stroke:0.15px #60656a;transform:scaleX(1.056)'>Показывать</span>
<span class='t ' style='left:274.30px;top:153.52px;font-size:8.5px;font-weight:400;color:#666;-webkit-text-stroke:0.15px #666;transform:scaleX(1.010)'>Все</span>
<span class='t ' style='left:316.90px;top:153.02px;font-size:9.6px;font-weight:400;color:#60656a;-webkit-text-stroke:0.15px #60656a;transform:scaleX(1.073)'>записей на странице</span>
<span class='t ' style='left:1065.30px;top:152.72px;font-size:9.6px;font-weight:400;color:#60656a;-webkit-text-stroke:0.15px #60656a;transform:scaleX(1.108)'>Поиск:</span>
<span class='t ' style='left:246.30px;top:177.88px;font-size:9.5px;font-weight:700;color:#151515;transform:scaleX(1.060)'>PID</span>
<span class='t ' style='left:284.90px;top:177.88px;font-size:9.5px;font-weight:700;color:#151515;transform:scaleX(1.040)'>Протокол - Адрес:Порт</span>
<span class='t ' style='left:466.90px;top:177.88px;font-size:9.5px;font-weight:700;color:#151515;transform:scaleX(1.049)'>Логин:Пароль</span>
<span class='t ' style='left:605.90px;top:177.88px;font-size:9.5px;font-weight:700;color:#151515;transform:scaleX(1.062)'>Истекает</span>
<span class='t ' style='left:703.90px;top:177.88px;font-size:9.5px;font-weight:700;color:#151515;transform:scaleX(1.062)'>Смена IP</span>
<span class='t ' style='left:830.90px;top:177.88px;font-size:9.5px;font-weight:700;color:#151515;transform:scaleX(1.036)'>ГЕО / Оператор</span>
<span class='t ' style='left:1121.10px;top:177.88px;font-size:9.5px;font-weight:700;color:#151515;transform:scaleX(1.040)'>Статус</span>
<span class='t ' style='left:238.20px;top:200.58px;font-size:9.5px;font-weight:400;color:#3a3a3a;-webkit-text-stroke:0.15px #3a3a3a;transform:scaleX(1.041)'>No group (100)</span>
<span class='t ' style='left:281.60px;top:221.68px;font-size:9.5px;font-weight:400;color:#3a3a3a;-webkit-text-stroke:0.15px #3a3a3a;transform:scaleX(0.983)'>HTTP</span>
<span class='t ' style='left:281.60px;top:239.47px;font-size:9.5px;font-weight:400;color:#3a3a3a;-webkit-text-stroke:0.15px #3a3a3a;transform:scaleX(0.962)'>SOCKS5</span>
<span class='t dot' style='left:324.60px;top:221.78px;font-size:9.5px;font-weight:400;color:#5585da;-webkit-text-stroke:0.15px #5585da;transform:scaleX(1.082)'>fproxy.site</span>
<span class='t dot' style='left:324.60px;top:239.47px;font-size:9.5px;font-weight:400;color:#5585da;-webkit-text-stroke:0.15px #5585da;transform:scaleX(1.082)'>gproxy.site</span>
<span class='t ' style='left:605.30px;top:230.38px;font-size:9.5px;font-weight:400;color:#3f8a58;-webkit-text-stroke:0.15px #3f8a58;transform:scaleX(0.997)'>04-05-2025 12:01</span>
<span class='t dot' style='left:703.90px;top:230.58px;font-size:9.5px;font-weight:400;color:#5585da;-webkit-text-stroke:0.15px #5585da;transform:scaleX(1.036)'>Ссылка для смены IP</span>
<span class='t ' style='left:830.30px;top:223.38px;font-size:9.5px;font-weight:400;color:#3d3d3d;-webkit-text-stroke:0.15px #3d3d3d;transform:scaleX(1.129)'>Нижний Новгород</span>
<span class='t ' style='left:830.50px;top:237.88px;font-size:9.5px;font-weight:400;color:#3d3d3d;-webkit-text-stroke:0.15px #3d3d3d;transform:scaleX(1.093)'>beeline</span>
<span class='t ' style='left:281.60px;top:258.12px;font-size:9.5px;font-weight:400;color:#3a3a3a;-webkit-text-stroke:0.15px #3a3a3a;transform:scaleX(0.983)'>HTTP</span>
<span class='t ' style='left:281.60px;top:275.92px;font-size:9.5px;font-weight:400;color:#3a3a3a;-webkit-text-stroke:0.15px #3a3a3a;transform:scaleX(0.962)'>SOCKS5</span>
<span class='t dot' style='left:324.60px;top:258.22px;font-size:9.5px;font-weight:400;color:#5585da;-webkit-text-stroke:0.15px #5585da;transform:scaleX(1.082)'>mproxy.site</span>
<span class='t dot' style='left:324.60px;top:275.92px;font-size:9.5px;font-weight:400;color:#5585da;-webkit-text-stroke:0.15px #5585da;transform:scaleX(1.082)'>bproxy.site</span>
<span class='t ' style='left:605.30px;top:266.82px;font-size:9.5px;font-weight:400;color:#3f8a58;-webkit-text-stroke:0.15px #3f8a58;transform:scaleX(0.997)'>04-05-2025 12:01</span>
<span class='t dot' style='left:703.90px;top:267.02px;font-size:9.5px;font-weight:400;color:#5585da;-webkit-text-stroke:0.15px #5585da;transform:scaleX(1.036)'>Ссылка для смены IP</span>
<span class='t ' style='left:830.30px;top:259.82px;font-size:9.5px;font-weight:400;color:#3d3d3d;-webkit-text-stroke:0.15px #3d3d3d;transform:scaleX(1.119)'>Нижний Новгород #9</span>
<span class='t ' style='left:830.50px;top:274.32px;font-size:9.5px;font-weight:400;color:#3d3d3d;-webkit-text-stroke:0.15px #3d3d3d;transform:scaleX(1.093)'>beeline</span>
<span class='t ' style='left:281.60px;top:294.57px;font-size:9.5px;font-weight:400;color:#3a3a3a;-webkit-text-stroke:0.15px #3a3a3a;transform:scaleX(0.983)'>HTTP</span>
<span class='t ' style='left:281.60px;top:312.37px;font-size:9.5px;font-weight:400;color:#3a3a3a;-webkit-text-stroke:0.15px #3a3a3a;transform:scaleX(0.962)'>SOCKS5</span>
<span class='t dot' style='left:324.60px;top:294.67px;font-size:9.5px;font-weight:400;color:#5585da;-webkit-text-stroke:0.15px #5585da;transform:scaleX(1.082)'>mproxy.site</span>
<span class='t dot' style='left:324.60px;top:312.37px;font-size:9.5px;font-weight:400;color:#5585da;-webkit-text-stroke:0.15px #5585da;transform:scaleX(1.082)'>bproxy.site</span>
<span class='t ' style='left:605.30px;top:303.27px;font-size:9.5px;font-weight:400;color:#3f8a58;-webkit-text-stroke:0.15px #3f8a58;transform:scaleX(0.997)'>04-05-2025 12:01</span>
<span class='t dot' style='left:703.90px;top:303.47px;font-size:9.5px;font-weight:400;color:#5585da;-webkit-text-stroke:0.15px #5585da;transform:scaleX(1.036)'>Ссылка для смены IP</span>
<span class='t ' style='left:830.30px;top:296.27px;font-size:9.5px;font-weight:400;color:#3d3d3d;-webkit-text-stroke:0.15px #3d3d3d;transform:scaleX(1.088)'>Россия, Новосибирск #3</span>
<span class='t ' style='left:830.50px;top:310.77px;font-size:9.5px;font-weight:400;color:#3d3d3d;-webkit-text-stroke:0.15px #3d3d3d;transform:scaleX(1.093)'>beeline</span>
<span class='t ' style='left:281.60px;top:331.02px;font-size:9.5px;font-weight:400;color:#3a3a3a;-webkit-text-stroke:0.15px #3a3a3a;transform:scaleX(0.983)'>HTTP</span>
<span class='t ' style='left:281.60px;top:348.82px;font-size:9.5px;font-weight:400;color:#3a3a3a;-webkit-text-stroke:0.15px #3a3a3a;transform:scaleX(0.962)'>SOCKS5</span>
<span class='t dot' style='left:324.60px;top:331.12px;font-size:9.5px;font-weight:400;color:#5585da;-webkit-text-stroke:0.15px #5585da;transform:scaleX(1.082)'>fproxy.site</span>
<span class='t dot' style='left:324.60px;top:348.82px;font-size:9.5px;font-weight:400;color:#5585da;-webkit-text-stroke:0.15px #5585da;transform:scaleX(1.082)'>gproxy.site</span>
<span class='t ' style='left:605.30px;top:339.73px;font-size:9.5px;font-weight:400;color:#3f8a58;-webkit-text-stroke:0.15px #3f8a58;transform:scaleX(0.997)'>04-05-2025 12:01</span>
<span class='t dot' style='left:703.90px;top:339.93px;font-size:9.5px;font-weight:400;color:#5585da;-webkit-text-stroke:0.15px #5585da;transform:scaleX(1.036)'>Ссылка для смены IP</span>
<span class='t ' style='left:830.30px;top:332.73px;font-size:9.5px;font-weight:400;color:#3d3d3d;-webkit-text-stroke:0.15px #3d3d3d;transform:scaleX(1.085)'>Россия, Санкт-Петербург, Невский район #4</span>
<span class='t ' style='left:830.50px;top:347.23px;font-size:9.5px;font-weight:400;color:#3d3d3d;-webkit-text-stroke:0.15px #3d3d3d;transform:scaleX(1.093)'>beeline</span>
<span class='t ' style='left:281.60px;top:367.47px;font-size:9.5px;font-weight:400;color:#3a3a3a;-webkit-text-stroke:0.15px #3a3a3a;transform:scaleX(0.983)'>HTTP</span>
<span class='t ' style='left:281.60px;top:385.27px;font-size:9.5px;font-weight:400;color:#3a3a3a;-webkit-text-stroke:0.15px #3a3a3a;transform:scaleX(0.962)'>SOCKS5</span>
<span class='t dot' style='left:324.60px;top:367.57px;font-size:9.5px;font-weight:400;color:#5585da;-webkit-text-stroke:0.15px #5585da;transform:scaleX(1.082)'>mproxy.site</span>
<span class='t dot' style='left:324.60px;top:385.27px;font-size:9.5px;font-weight:400;color:#5585da;-webkit-text-stroke:0.15px #5585da;transform:scaleX(1.082)'>bproxy.site</span>
<span class='t ' style='left:605.30px;top:376.18px;font-size:9.5px;font-weight:400;color:#3f8a58;-webkit-text-stroke:0.15px #3f8a58;transform:scaleX(0.997)'>04-05-2025 12:01</span>
<span class='t dot' style='left:703.90px;top:376.38px;font-size:9.5px;font-weight:400;color:#5585da;-webkit-text-stroke:0.15px #5585da;transform:scaleX(1.036)'>Ссылка для смены IP</span>
<span class='t ' style='left:830.30px;top:369.18px;font-size:9.5px;font-weight:400;color:#3d3d3d;-webkit-text-stroke:0.15px #3d3d3d;transform:scaleX(1.104)'>Екатеринбург</span>
<span class='t ' style='left:830.50px;top:383.68px;font-size:9.5px;font-weight:400;color:#3d3d3d;-webkit-text-stroke:0.15px #3d3d3d;transform:scaleX(1.117)'>megafone</span>
<span class='t ' style='left:281.60px;top:403.92px;font-size:9.5px;font-weight:400;color:#3a3a3a;-webkit-text-stroke:0.15px #3a3a3a;transform:scaleX(0.983)'>HTTP</span>
<span class='t ' style='left:281.60px;top:421.72px;font-size:9.5px;font-weight:400;color:#3a3a3a;-webkit-text-stroke:0.15px #3a3a3a;transform:scaleX(0.962)'>SOCKS5</span>
<span class='t dot' style='left:324.60px;top:404.02px;font-size:9.5px;font-weight:400;color:#5585da;-webkit-text-stroke:0.15px #5585da;transform:scaleX(1.082)'>dproxy.site</span>
<span class='t dot' style='left:324.60px;top:421.72px;font-size:9.5px;font-weight:400;color:#5585da;-webkit-text-stroke:0.15px #5585da;transform:scaleX(1.082)'>eproxy.site</span>
<span class='t ' style='left:605.30px;top:412.62px;font-size:9.5px;font-weight:400;color:#3f8a58;-webkit-text-stroke:0.15px #3f8a58;transform:scaleX(0.997)'>04-05-2025 12:01</span>
<span class='t dot' style='left:703.90px;top:412.82px;font-size:9.5px;font-weight:400;color:#5585da;-webkit-text-stroke:0.15px #5585da;transform:scaleX(1.036)'>Ссылка для смены IP</span>
<span class='t ' style='left:830.30px;top:405.62px;font-size:9.5px;font-weight:400;color:#3d3d3d;-webkit-text-stroke:0.15px #3d3d3d;transform:scaleX(1.092)'>Россия, Иркутск, Кировский район</span>
<span class='t ' style='left:830.50px;top:420.12px;font-size:9.5px;font-weight:400;color:#3d3d3d;-webkit-text-stroke:0.15px #3d3d3d;transform:scaleX(1.080)'>rostelecom</span>
<span class='t ' style='left:281.60px;top:440.38px;font-size:9.5px;font-weight:400;color:#3a3a3a;-webkit-text-stroke:0.15px #3a3a3a;transform:scaleX(0.983)'>HTTP</span>
<span class='t ' style='left:281.60px;top:458.18px;font-size:9.5px;font-weight:400;color:#3a3a3a;-webkit-text-stroke:0.15px #3a3a3a;transform:scaleX(0.962)'>SOCKS5</span>
<span class='t dot' style='left:324.60px;top:440.48px;font-size:9.5px;font-weight:400;color:#5585da;-webkit-text-stroke:0.15px #5585da;transform:scaleX(1.082)'>fproxy.site</span>
<span class='t dot' style='left:324.60px;top:458.18px;font-size:9.5px;font-weight:400;color:#5585da;-webkit-text-stroke:0.15px #5585da;transform:scaleX(1.082)'>gproxy.site</span>
<span class='t ' style='left:605.30px;top:449.08px;font-size:9.5px;font-weight:400;color:#3f8a58;-webkit-text-stroke:0.15px #3f8a58;transform:scaleX(0.997)'>04-05-2025 12:01</span>
<span class='t dot' style='left:703.90px;top:449.28px;font-size:9.5px;font-weight:400;color:#5585da;-webkit-text-stroke:0.15px #5585da;transform:scaleX(1.036)'>Ссылка для смены IP</span>
<span class='t ' style='left:830.30px;top:442.08px;font-size:9.5px;font-weight:400;color:#3d3d3d;-webkit-text-stroke:0.15px #3d3d3d;transform:scaleX(1.083)'>Казань #6</span>
<span class='t ' style='left:830.50px;top:456.58px;font-size:9.5px;font-weight:400;color:#3d3d3d;-webkit-text-stroke:0.15px #3d3d3d;transform:scaleX(1.093)'>beeline</span>
<span class='t ' style='left:281.60px;top:476.82px;font-size:9.5px;font-weight:400;color:#3a3a3a;-webkit-text-stroke:0.15px #3a3a3a;transform:scaleX(0.983)'>HTTP</span>
<span class='t ' style='left:281.60px;top:494.62px;font-size:9.5px;font-weight:400;color:#3a3a3a;-webkit-text-stroke:0.15px #3a3a3a;transform:scaleX(0.962)'>SOCKS5</span>
<span class='t dot' style='left:324.60px;top:476.93px;font-size:9.5px;font-weight:400;color:#5585da;-webkit-text-stroke:0.15px #5585da;transform:scaleX(1.082)'>mproxy.site</span>
<span class='t dot' style='left:324.60px;top:494.62px;font-size:9.5px;font-weight:400;color:#5585da;-webkit-text-stroke:0.15px #5585da;transform:scaleX(1.082)'>bproxy.site</span>
<span class='t ' style='left:605.30px;top:485.53px;font-size:9.5px;font-weight:400;color:#3f8a58;-webkit-text-stroke:0.15px #3f8a58;transform:scaleX(0.997)'>04-05-2025 12:01</span>
<span class='t dot' style='left:703.90px;top:485.73px;font-size:9.5px;font-weight:400;color:#5585da;-webkit-text-stroke:0.15px #5585da;transform:scaleX(1.036)'>Ссылка для смены IP</span>
<span class='t ' style='left:830.30px;top:478.53px;font-size:9.5px;font-weight:400;color:#3d3d3d;-webkit-text-stroke:0.15px #3d3d3d;transform:scaleX(1.054)'>Россия, Волгоград #12</span>
<span class='t ' style='left:830.50px;top:493.03px;font-size:9.5px;font-weight:400;color:#3d3d3d;-webkit-text-stroke:0.15px #3d3d3d;transform:scaleX(1.117)'>megafone</span>
<span class='t ' style='left:281.60px;top:513.27px;font-size:9.5px;font-weight:400;color:#3a3a3a;-webkit-text-stroke:0.15px #3a3a3a;transform:scaleX(0.983)'>HTTP</span>
<span class='t ' style='left:281.60px;top:531.08px;font-size:9.5px;font-weight:400;color:#3a3a3a;-webkit-text-stroke:0.15px #3a3a3a;transform:scaleX(0.962)'>SOCKS5</span>
<span class='t dot' style='left:324.60px;top:513.38px;font-size:9.5px;font-weight:400;color:#5585da;-webkit-text-stroke:0.15px #5585da;transform:scaleX(1.082)'>dproxy.site</span>
<span class='t dot' style='left:324.60px;top:531.08px;font-size:9.5px;font-weight:400;color:#5585da;-webkit-text-stroke:0.15px #5585da;transform:scaleX(1.082)'>eproxy.site</span>
<span class='t ' style='left:605.30px;top:521.98px;font-size:9.5px;font-weight:400;color:#3f8a58;-webkit-text-stroke:0.15px #3f8a58;transform:scaleX(0.997)'>04-05-2025 12:01</span>
<span class='t dot' style='left:703.90px;top:522.17px;font-size:9.5px;font-weight:400;color:#5585da;-webkit-text-stroke:0.15px #5585da;transform:scaleX(1.036)'>Ссылка для смены IP</span>
<span class='t ' style='left:830.30px;top:514.98px;font-size:9.5px;font-weight:400;color:#3d3d3d;-webkit-text-stroke:0.15px #3d3d3d;transform:scaleX(1.038)'>Россия, Волгоград #11</span>
<span class='t ' style='left:830.50px;top:529.48px;font-size:9.5px;font-weight:400;color:#3d3d3d;-webkit-text-stroke:0.15px #3d3d3d;transform:scaleX(1.117)'>megafone</span>
<span class='t ' style='left:281.60px;top:549.72px;font-size:9.5px;font-weight:400;color:#3a3a3a;-webkit-text-stroke:0.15px #3a3a3a;transform:scaleX(0.983)'>HTTP</span>
<span class='t ' style='left:281.60px;top:567.52px;font-size:9.5px;font-weight:400;color:#3a3a3a;-webkit-text-stroke:0.15px #3a3a3a;transform:scaleX(0.962)'>SOCKS5</span>
<span class='t dot' style='left:324.60px;top:549.82px;font-size:9.5px;font-weight:400;color:#5585da;-webkit-text-stroke:0.15px #5585da;transform:scaleX(1.082)'>fproxy.site</span>
<span class='t dot' style='left:324.60px;top:567.52px;font-size:9.5px;font-weight:400;color:#5585da;-webkit-text-stroke:0.15px #5585da;transform:scaleX(1.082)'>gproxy.site</span>
<span class='t ' style='left:605.30px;top:558.42px;font-size:9.5px;font-weight:400;color:#3f8a58;-webkit-text-stroke:0.15px #3f8a58;transform:scaleX(0.997)'>04-05-2025 12:01</span>
<span class='t dot' style='left:703.90px;top:558.62px;font-size:9.5px;font-weight:400;color:#5585da;-webkit-text-stroke:0.15px #5585da;transform:scaleX(1.036)'>Ссылка для смены IP</span>
<span class='t ' style='left:830.30px;top:551.42px;font-size:9.5px;font-weight:400;color:#3d3d3d;-webkit-text-stroke:0.15px #3d3d3d;transform:scaleX(1.064)'>Россия, Нижний Новгород #11</span>
<span class='t ' style='left:830.50px;top:565.92px;font-size:9.5px;font-weight:400;color:#3d3d3d;-webkit-text-stroke:0.15px #3d3d3d;transform:scaleX(1.117)'>megafone</span>
<div class='tb'><div class='blur' style='left:368.5px;top:221.70px;width:28.0px;height:11.0px'><i style='left:1.5px;top:3.0px;width:3.2px;height:4.6px;background:#b6c9f1'></i><i style='left:4.9px;top:3.4px;width:3.5px;height:4.6px;background:#cbd8f5'></i><i style='left:9.1px;top:3.5px;width:3.4px;height:4.6px;background:#d0dcf6'></i><i style='left:13.0px;top:3.4px;width:5.2px;height:4.6px;background:#c3d2f3'></i><i style='left:18.9px;top:3.2px;width:5.0px;height:4.6px;background:#d0dcf6'></i><i style='left:24.3px;top:3.1px;width:2.7px;height:4.6px;background:#adc2ef'></i></div>
<div class='blur' style='left:368.5px;top:238.70px;width:32.0px;height:11.0px'><i style='left:1.5px;top:2.8px;width:3.7px;height:4.6px;background:#b6c9f1'></i><i style='left:5.6px;top:3.6px;width:5.0px;height:4.6px;background:#cbd8f5'></i><i style='left:10.9px;top:3.3px;width:6.9px;height:4.6px;background:#c3d2f3'></i><i style='left:18.0px;top:3.2px;width:4.4px;height:4.6px;background:#adc2ef'></i><i style='left:23.5px;top:3.4px;width:3.3px;height:4.6px;background:#d0dcf6'></i><i style='left:27.9px;top:3.4px;width:3.1px;height:4.6px;background:#cbd8f5'></i></div>
<div class='blur' style='left:368.5px;top:258.15px;width:35.0px;height:11.0px'><i style='left:1.5px;top:2.9px;width:3.4px;height:4.6px;background:#d0dcf6'></i><i style='left:5.0px;top:2.8px;width:4.5px;height:4.6px;background:#c3d2f3'></i><i style='left:9.7px;top:3.8px;width:4.5px;height:4.6px;background:#cbd8f5'></i><i style='left:15.0px;top:3.7px;width:4.9px;height:4.6px;background:#c3d2f3'></i><i style='left:21.1px;top:3.1px;width:4.9px;height:4.6px;background:#adc2ef'></i><i style='left:26.1px;top:3.3px;width:6.0px;height:4.6px;background:#cbd8f5'></i><i style='left:32.9px;top:3.8px;width:1.1px;height:4.6px;background:#b6c9f1'></i></div>
<div class='blur' style='left:368.5px;top:275.15px;width:32.0px;height:11.0px'><i style='left:1.5px;top:3.8px;width:3.6px;height:4.6px;background:#d0dcf6'></i><i style='left:6.0px;top:3.5px;width:4.2px;height:4.6px;background:#c3d2f3'></i><i style='left:10.5px;top:3.1px;width:4.5px;height:4.6px;background:#b6c9f1'></i><i style='left:15.2px;top:3.1px;width:5.2px;height:4.6px;background:#d0dcf6'></i><i style='left:20.7px;top:3.7px;width:6.2px;height:4.6px;background:#b6c9f1'></i><i style='left:27.9px;top:2.9px;width:3.1px;height:4.6px;background:#b6c9f1'></i></div>
<div class='blur' style='left:368.5px;top:294.60px;width:35.0px;height:11.0px'><i style='left:1.5px;top:3.2px;width:4.3px;height:4.6px;background:#d0dcf6'></i><i style='left:6.0px;top:3.8px;width:6.6px;height:4.6px;background:#cbd8f5'></i><i style='left:13.4px;top:3.2px;width:6.3px;height:4.6px;background:#d0dcf6'></i><i style='left:20.8px;top:2.9px;width:5.0px;height:4.6px;background:#d0dcf6'></i><i style='left:26.4px;top:3.4px;width:6.5px;height:4.6px;background:#b6c9f1'></i></div>
<div class='blur' style='left:368.5px;top:311.60px;width:32.0px;height:11.0px'><i style='left:1.5px;top:3.3px;width:3.6px;height:4.6px;background:#b6c9f1'></i><i style='left:6.0px;top:3.5px;width:5.2px;height:4.6px;background:#cbd8f5'></i><i style='left:11.8px;top:3.8px;width:4.9px;height:4.6px;background:#c3d2f3'></i><i style='left:16.8px;top:3.6px;width:3.8px;height:4.6px;background:#c3d2f3'></i><i style='left:21.2px;top:3.2px;width:5.2px;height:4.6px;background:#c3d2f3'></i><i style='left:27.2px;top:2.9px;width:3.8px;height:4.6px;background:#d0dcf6'></i></div>
<div class='blur' style='left:368.5px;top:331.05px;width:26.0px;height:11.0px'><i style='left:1.5px;top:3.8px;width:5.8px;height:4.6px;background:#adc2ef'></i><i style='left:7.6px;top:3.7px;width:3.1px;height:4.6px;background:#c3d2f3'></i><i style='left:10.7px;top:3.0px;width:6.4px;height:4.6px;background:#c3d2f3'></i><i style='left:17.3px;top:3.2px;width:3.0px;height:4.6px;background:#d0dcf6'></i><i style='left:21.5px;top:3.3px;width:3.5px;height:4.6px;background:#c3d2f3'></i></div>
<div class='blur' style='left:368.5px;top:348.05px;width:32.0px;height:11.0px'><i style='left:1.5px;top:3.0px;width:3.4px;height:4.6px;background:#b6c9f1'></i><i style='left:5.2px;top:3.3px;width:6.7px;height:4.6px;background:#cbd8f5'></i><i style='left:12.1px;top:3.0px;width:4.8px;height:4.6px;background:#b6c9f1'></i><i style='left:17.9px;top:2.7px;width:7.0px;height:4.6px;background:#c3d2f3'></i><i style='left:25.7px;top:3.3px;width:5.2px;height:4.6px;background:#b6c9f1'></i></div>
<div class='blur' style='left:368.5px;top:367.50px;width:35.0px;height:11.0px'><i style='left:1.5px;top:3.6px;width:6.5px;height:4.6px;background:#adc2ef'></i><i style='left:8.9px;top:3.6px;width:5.0px;height:4.6px;background:#cbd8f5'></i><i style='left:14.6px;top:3.5px;width:3.2px;height:4.6px;background:#d0dcf6'></i><i style='left:18.7px;top:3.8px;width:6.2px;height:4.6px;background:#b6c9f1'></i><i style='left:25.8px;top:3.7px;width:5.3px;height:4.6px;background:#c3d2f3'></i><i style='left:31.8px;top:2.8px;width:2.2px;height:4.6px;background:#b6c9f1'></i></div>
<div class='blur' style='left:368.5px;top:384.50px;width:32.0px;height:11.0px'><i style='left:1.5px;top:3.2px;width:5.5px;height:4.6px;background:#c3d2f3'></i><i style='left:7.6px;top:3.5px;width:3.2px;height:4.6px;background:#c3d2f3'></i><i style='left:11.6px;top:3.2px;width:5.0px;height:4.6px;background:#c3d2f3'></i><i style='left:16.7px;top:2.8px;width:6.7px;height:4.6px;background:#d0dcf6'></i><i style='left:24.0px;top:3.0px;width:6.0px;height:4.6px;background:#adc2ef'></i></div>
<div class='blur' style='left:368.5px;top:403.95px;width:32.0px;height:11.0px'><i style='left:1.5px;top:3.7px;width:3.0px;height:4.6px;background:#cbd8f5'></i><i style='left:4.7px;top:3.8px;width:6.7px;height:4.6px;background:#c3d2f3'></i><i style='left:11.7px;top:3.2px;width:4.5px;height:4.6px;background:#adc2ef'></i><i style='left:17.2px;top:3.6px;width:3.3px;height:4.6px;background:#adc2ef'></i><i style='left:21.6px;top:3.7px;width:4.1px;height:4.6px;background:#c3d2f3'></i><i style='left:26.0px;top:3.9px;width:5.0px;height:4.6px;background:#b6c9f1'></i></div>
<div class='blur' style='left:368.5px;top:420.95px;width:32.0px;height:11.0px'><i style='left:1.5px;top:3.6px;width:4.3px;height:4.6px;background:#cbd8f5'></i><i style='left:6.3px;top:3.8px;width:3.1px;height:4.6px;background:#adc2ef'></i><i style='left:10.5px;top:2.8px;width:5.2px;height:4.6px;background:#c3d2f3'></i><i style='left:16.6px;top:3.5px;width:4.8px;height:4.6px;background:#b6c9f1'></i><i style='left:21.7px;top:2.9px;width:3.2px;height:4.6px;background:#d0dcf6'></i><i style='left:25.5px;top:3.0px;width:4.4px;height:4.6px;background:#cbd8f5'></i></div>
<div class='blur' style='left:368.5px;top:440.40px;width:28.0px;height:11.0px'><i style='left:1.5px;top:2.8px;width:5.6px;height:4.6px;background:#adc2ef'></i><i style='left:8.0px;top:3.0px;width:3.0px;height:4.6px;background:#b6c9f1'></i><i style='left:12.1px;top:3.9px;width:5.6px;height:4.6px;background:#cbd8f5'></i><i style='left:18.5px;top:3.5px;width:5.1px;height:4.6px;background:#adc2ef'></i><i style='left:23.7px;top:3.8px;width:3.3px;height:4.6px;background:#d0dcf6'></i></div>
<div class='blur' style='left:368.5px;top:457.40px;width:32.0px;height:11.0px'><i style='left:1.5px;top:2.7px;width:4.0px;height:4.6px;background:#d0dcf6'></i><i style='left:6.2px;top:3.9px;width:7.0px;height:4.6px;background:#cbd8f5'></i><i style='left:13.9px;top:3.3px;width:6.5px;height:4.6px;background:#adc2ef'></i><i style='left:21.1px;top:3.5px;width:3.1px;height:4.6px;background:#adc2ef'></i><i style='left:24.6px;top:3.8px;width:3.1px;height:4.6px;background:#adc2ef'></i><i style='left:28.5px;top:3.5px;width:2.5px;height:4.6px;background:#b6c9f1'></i></div>
<div class='blur' style='left:368.5px;top:476.85px;width:35.0px;height:11.0px'><i style='left:1.5px;top:3.0px;width:3.3px;height:4.6px;background:#c3d2f3'></i><i style='left:5.6px;top:3.1px;width:6.6px;height:4.6px;background:#cbd8f5'></i><i style='left:12.6px;top:3.0px;width:6.8px;height:4.6px;background:#c3d2f3'></i><i style='left:20.3px;top:3.1px;width:4.3px;height:4.6px;background:#cbd8f5'></i><i style='left:25.5px;top:2.7px;width:5.4px;height:4.6px;background:#c3d2f3'></i><i style='left:31.1px;top:3.8px;width:2.9px;height:4.6px;background:#adc2ef'></i></div>
<div class='blur' style='left:368.5px;top:493.85px;width:32.0px;height:11.0px'><i style='left:1.5px;top:3.7px;width:4.0px;height:4.6px;background:#adc2ef'></i><i style='left:5.7px;top:3.7px;width:5.0px;height:4.6px;background:#c3d2f3'></i><i style='left:11.5px;top:3.4px;width:6.3px;height:4.6px;background:#b6c9f1'></i><i style='left:18.2px;top:3.6px;width:4.3px;height:4.6px;background:#cbd8f5'></i><i style='left:23.2px;top:3.6px;width:5.0px;height:4.6px;background:#adc2ef'></i><i style='left:28.6px;top:3.3px;width:2.4px;height:4.6px;background:#c3d2f3'></i></div>
<div class='blur' style='left:368.5px;top:513.30px;width:32.0px;height:11.0px'><i style='left:1.5px;top:3.1px;width:4.5px;height:4.6px;background:#d0dcf6'></i><i style='left:6.2px;top:3.3px;width:6.2px;height:4.6px;background:#d0dcf6'></i><i style='left:12.9px;top:2.9px;width:6.2px;height:4.6px;background:#d0dcf6'></i><i style='left:19.7px;top:3.5px;width:5.6px;height:4.6px;background:#adc2ef'></i><i style='left:25.8px;top:3.2px;width:4.1px;height:4.6px;background:#cbd8f5'></i></div>
<div class='blur' style='left:368.5px;top:530.30px;width:32.0px;height:11.0px'><i style='left:1.5px;top:3.2px;width:6.0px;height:4.6px;background:#cbd8f5'></i><i style='left:7.5px;top:3.5px;width:6.1px;height:4.6px;background:#cbd8f5'></i><i style='left:14.0px;top:3.2px;width:4.6px;height:4.6px;background:#c3d2f3'></i><i style='left:18.8px;top:3.2px;width:3.5px;height:4.6px;background:#c3d2f3'></i><i style='left:23.4px;top:2.9px;width:4.8px;height:4.6px;background:#b6c9f1'></i><i style='left:28.3px;top:2.8px;width:2.7px;height:4.6px;background:#adc2ef'></i></div>
<div class='blur' style='left:368.5px;top:549.75px;width:28.0px;height:11.0px'><i style='left:1.5px;top:2.7px;width:5.0px;height:4.6px;background:#c3d2f3'></i><i style='left:6.7px;top:3.6px;width:6.7px;height:4.6px;background:#cbd8f5'></i><i style='left:14.0px;top:3.8px;width:3.2px;height:4.6px;background:#d0dcf6'></i><i style='left:18.0px;top:3.7px;width:6.1px;height:4.6px;background:#c3d2f3'></i><i style='left:25.3px;top:2.9px;width:1.7px;height:4.6px;background:#c3d2f3'></i></div>
<div class='blur' style='left:368.5px;top:566.75px;width:32.0px;height:11.0px'><i style='left:1.5px;top:3.5px;width:5.0px;height:4.6px;background:#b6c9f1'></i><i style='left:7.3px;top:3.4px;width:3.9px;height:4.6px;background:#cbd8f5'></i><i style='left:11.5px;top:3.0px;width:4.3px;height:4.6px;background:#d0dcf6'></i><i style='left:16.8px;top:3.9px;width:3.6px;height:4.6px;background:#d0dcf6'></i><i style='left:20.9px;top:3.3px;width:5.4px;height:4.6px;background:#d0dcf6'></i><i style='left:26.7px;top:3.2px;width:3.1px;height:4.6px;background:#b6c9f1'></i></div></div>
</div>
</body></html>
